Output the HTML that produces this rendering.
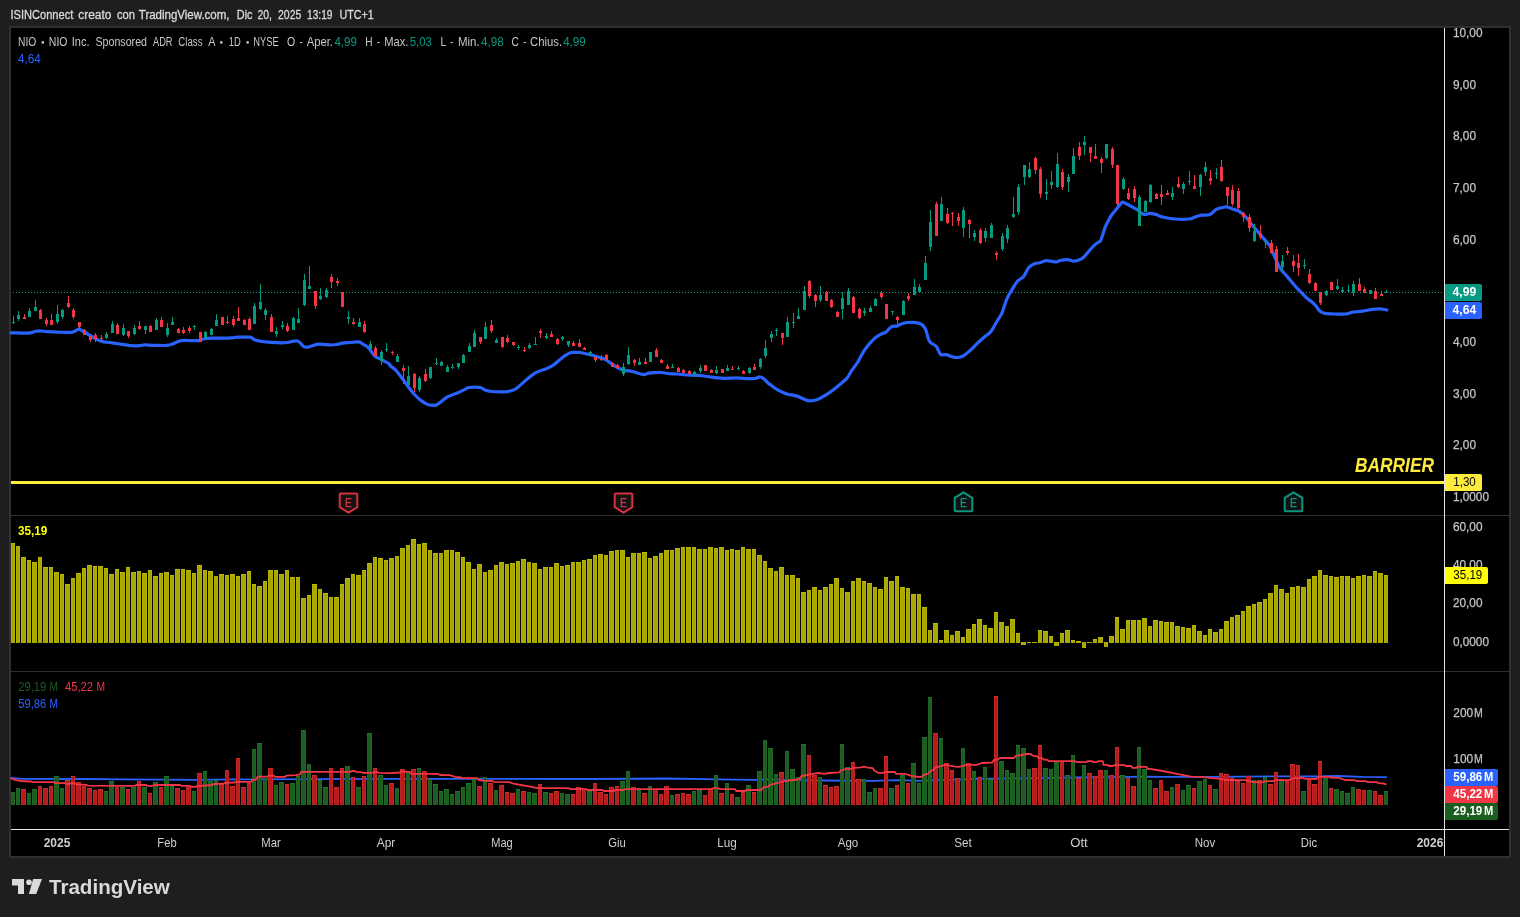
<!DOCTYPE html>
<html><head><meta charset="utf-8"><title>NIO chart</title>
<style>html,body{margin:0;padding:0;background:#1e1e1e;overflow:hidden}svg text{font-family:"Liberation Sans",sans-serif}</style></head>
<body>
<div style="will-change:transform;width:1520px;height:917px">
<svg width="1520" height="917" viewBox="0 0 1520 917" style="display:block">
<rect width="1520" height="917" fill="#1e1e1e"/>
<rect x="9" y="26" width="1502" height="832" fill="#2f2f2f"/>
<rect x="11" y="28" width="1498" height="828" fill="#000"/>
<g shape-rendering="crispEdges">
<rect x="11" y="515" width="1498" height="1" fill="#2e2e2e"/>
<rect x="11" y="671" width="1498" height="1" fill="#2e2e2e"/>
<line x1="13" x2="1444" y1="292.5" y2="292.5" stroke="#089981" stroke-width="1" stroke-dasharray="1 2"/>
<rect x="11" y="543" width="4" height="100" fill="#b0ae00"/>
<rect x="11" y="543" width="4" height="1" fill="#bab800"/>
<rect x="12" y="544" width="2" height="99" fill="#a8a600"/>
<rect x="16" y="546" width="4" height="97" fill="#b0ae00"/>
<rect x="16" y="546" width="4" height="1" fill="#bab800"/>
<rect x="17" y="547" width="2" height="96" fill="#a8a600"/>
<rect x="21" y="557" width="5" height="86" fill="#b0ae00"/>
<rect x="21" y="557" width="5" height="1" fill="#bab800"/>
<rect x="22" y="558" width="3" height="85" fill="#a8a600"/>
<rect x="27" y="560" width="4" height="83" fill="#b0ae00"/>
<rect x="27" y="560" width="4" height="1" fill="#bab800"/>
<rect x="28" y="561" width="2" height="82" fill="#a8a600"/>
<rect x="32" y="562" width="5" height="81" fill="#b0ae00"/>
<rect x="32" y="562" width="5" height="1" fill="#bab800"/>
<rect x="33" y="563" width="3" height="80" fill="#a8a600"/>
<rect x="38" y="557" width="4" height="86" fill="#b0ae00"/>
<rect x="38" y="557" width="4" height="1" fill="#bab800"/>
<rect x="39" y="558" width="2" height="85" fill="#a8a600"/>
<rect x="43" y="567" width="5" height="76" fill="#b0ae00"/>
<rect x="43" y="567" width="5" height="1" fill="#bab800"/>
<rect x="44" y="568" width="3" height="75" fill="#a8a600"/>
<rect x="49" y="567" width="4" height="76" fill="#b0ae00"/>
<rect x="49" y="567" width="4" height="1" fill="#bab800"/>
<rect x="50" y="568" width="2" height="75" fill="#a8a600"/>
<rect x="54" y="572" width="5" height="71" fill="#b0ae00"/>
<rect x="54" y="572" width="5" height="1" fill="#bab800"/>
<rect x="55" y="573" width="3" height="70" fill="#a8a600"/>
<rect x="60" y="574" width="4" height="69" fill="#b0ae00"/>
<rect x="60" y="574" width="4" height="1" fill="#bab800"/>
<rect x="61" y="575" width="2" height="68" fill="#a8a600"/>
<rect x="65" y="584" width="5" height="59" fill="#b0ae00"/>
<rect x="65" y="584" width="5" height="1" fill="#bab800"/>
<rect x="66" y="585" width="3" height="58" fill="#a8a600"/>
<rect x="71" y="578" width="4" height="65" fill="#b0ae00"/>
<rect x="71" y="578" width="4" height="1" fill="#bab800"/>
<rect x="72" y="579" width="2" height="64" fill="#a8a600"/>
<rect x="76" y="573" width="5" height="70" fill="#b0ae00"/>
<rect x="76" y="573" width="5" height="1" fill="#bab800"/>
<rect x="77" y="574" width="3" height="69" fill="#a8a600"/>
<rect x="82" y="568" width="4" height="75" fill="#b0ae00"/>
<rect x="82" y="568" width="4" height="1" fill="#bab800"/>
<rect x="83" y="569" width="2" height="74" fill="#a8a600"/>
<rect x="87" y="565" width="5" height="78" fill="#b0ae00"/>
<rect x="87" y="565" width="5" height="1" fill="#bab800"/>
<rect x="88" y="566" width="3" height="77" fill="#a8a600"/>
<rect x="93" y="566" width="4" height="77" fill="#b0ae00"/>
<rect x="93" y="566" width="4" height="1" fill="#bab800"/>
<rect x="94" y="567" width="2" height="76" fill="#a8a600"/>
<rect x="98" y="566" width="5" height="77" fill="#b0ae00"/>
<rect x="98" y="566" width="5" height="1" fill="#bab800"/>
<rect x="99" y="567" width="3" height="76" fill="#a8a600"/>
<rect x="104" y="568" width="4" height="75" fill="#b0ae00"/>
<rect x="104" y="568" width="4" height="1" fill="#bab800"/>
<rect x="105" y="569" width="2" height="74" fill="#a8a600"/>
<rect x="109" y="574" width="5" height="69" fill="#b0ae00"/>
<rect x="109" y="574" width="5" height="1" fill="#bab800"/>
<rect x="110" y="575" width="3" height="68" fill="#a8a600"/>
<rect x="115" y="569" width="4" height="74" fill="#b0ae00"/>
<rect x="115" y="569" width="4" height="1" fill="#bab800"/>
<rect x="116" y="570" width="2" height="73" fill="#a8a600"/>
<rect x="120" y="572" width="5" height="71" fill="#b0ae00"/>
<rect x="120" y="572" width="5" height="1" fill="#bab800"/>
<rect x="121" y="573" width="3" height="70" fill="#a8a600"/>
<rect x="126" y="567" width="4" height="76" fill="#b0ae00"/>
<rect x="126" y="567" width="4" height="1" fill="#bab800"/>
<rect x="127" y="568" width="2" height="75" fill="#a8a600"/>
<rect x="131" y="572" width="5" height="71" fill="#b0ae00"/>
<rect x="131" y="572" width="5" height="1" fill="#bab800"/>
<rect x="132" y="573" width="3" height="70" fill="#a8a600"/>
<rect x="137" y="571" width="4" height="72" fill="#b0ae00"/>
<rect x="137" y="571" width="4" height="1" fill="#bab800"/>
<rect x="138" y="572" width="2" height="71" fill="#a8a600"/>
<rect x="142" y="573" width="5" height="70" fill="#b0ae00"/>
<rect x="142" y="573" width="5" height="1" fill="#bab800"/>
<rect x="143" y="574" width="3" height="69" fill="#a8a600"/>
<rect x="148" y="570" width="4" height="73" fill="#b0ae00"/>
<rect x="148" y="570" width="4" height="1" fill="#bab800"/>
<rect x="149" y="571" width="2" height="72" fill="#a8a600"/>
<rect x="153" y="576" width="5" height="67" fill="#b0ae00"/>
<rect x="153" y="576" width="5" height="1" fill="#bab800"/>
<rect x="154" y="577" width="3" height="66" fill="#a8a600"/>
<rect x="159" y="573" width="4" height="70" fill="#b0ae00"/>
<rect x="159" y="573" width="4" height="1" fill="#bab800"/>
<rect x="160" y="574" width="2" height="69" fill="#a8a600"/>
<rect x="164" y="572" width="5" height="71" fill="#b0ae00"/>
<rect x="164" y="572" width="5" height="1" fill="#bab800"/>
<rect x="165" y="573" width="3" height="70" fill="#a8a600"/>
<rect x="170" y="575" width="4" height="68" fill="#b0ae00"/>
<rect x="170" y="575" width="4" height="1" fill="#bab800"/>
<rect x="171" y="576" width="2" height="67" fill="#a8a600"/>
<rect x="175" y="569" width="5" height="74" fill="#b0ae00"/>
<rect x="175" y="569" width="5" height="1" fill="#bab800"/>
<rect x="176" y="570" width="3" height="73" fill="#a8a600"/>
<rect x="181" y="569" width="4" height="74" fill="#b0ae00"/>
<rect x="181" y="569" width="4" height="1" fill="#bab800"/>
<rect x="182" y="570" width="2" height="73" fill="#a8a600"/>
<rect x="186" y="570" width="5" height="73" fill="#b0ae00"/>
<rect x="186" y="570" width="5" height="1" fill="#bab800"/>
<rect x="187" y="571" width="3" height="72" fill="#a8a600"/>
<rect x="192" y="573" width="4" height="70" fill="#b0ae00"/>
<rect x="192" y="573" width="4" height="1" fill="#bab800"/>
<rect x="193" y="574" width="2" height="69" fill="#a8a600"/>
<rect x="197" y="565" width="5" height="78" fill="#b0ae00"/>
<rect x="197" y="565" width="5" height="1" fill="#bab800"/>
<rect x="198" y="566" width="3" height="77" fill="#a8a600"/>
<rect x="203" y="570" width="4" height="73" fill="#b0ae00"/>
<rect x="203" y="570" width="4" height="1" fill="#bab800"/>
<rect x="204" y="571" width="2" height="72" fill="#a8a600"/>
<rect x="208" y="571" width="5" height="72" fill="#b0ae00"/>
<rect x="208" y="571" width="5" height="1" fill="#bab800"/>
<rect x="209" y="572" width="3" height="71" fill="#a8a600"/>
<rect x="214" y="576" width="4" height="67" fill="#b0ae00"/>
<rect x="214" y="576" width="4" height="1" fill="#bab800"/>
<rect x="215" y="577" width="2" height="66" fill="#a8a600"/>
<rect x="219" y="574" width="5" height="69" fill="#b0ae00"/>
<rect x="219" y="574" width="5" height="1" fill="#bab800"/>
<rect x="220" y="575" width="3" height="68" fill="#a8a600"/>
<rect x="225" y="575" width="4" height="68" fill="#b0ae00"/>
<rect x="225" y="575" width="4" height="1" fill="#bab800"/>
<rect x="226" y="576" width="2" height="67" fill="#a8a600"/>
<rect x="230" y="574" width="5" height="69" fill="#b0ae00"/>
<rect x="230" y="574" width="5" height="1" fill="#bab800"/>
<rect x="231" y="575" width="3" height="68" fill="#a8a600"/>
<rect x="236" y="576" width="4" height="67" fill="#b0ae00"/>
<rect x="236" y="576" width="4" height="1" fill="#bab800"/>
<rect x="237" y="577" width="2" height="66" fill="#a8a600"/>
<rect x="241" y="574" width="5" height="69" fill="#b0ae00"/>
<rect x="241" y="574" width="5" height="1" fill="#bab800"/>
<rect x="242" y="575" width="3" height="68" fill="#a8a600"/>
<rect x="247" y="571" width="4" height="72" fill="#b0ae00"/>
<rect x="247" y="571" width="4" height="1" fill="#bab800"/>
<rect x="248" y="572" width="2" height="71" fill="#a8a600"/>
<rect x="252" y="584" width="4" height="59" fill="#b0ae00"/>
<rect x="252" y="584" width="4" height="1" fill="#bab800"/>
<rect x="253" y="585" width="2" height="58" fill="#a8a600"/>
<rect x="257" y="586" width="5" height="57" fill="#b0ae00"/>
<rect x="257" y="586" width="5" height="1" fill="#bab800"/>
<rect x="258" y="587" width="3" height="56" fill="#a8a600"/>
<rect x="263" y="581" width="4" height="62" fill="#b0ae00"/>
<rect x="263" y="581" width="4" height="1" fill="#bab800"/>
<rect x="264" y="582" width="2" height="61" fill="#a8a600"/>
<rect x="268" y="570" width="5" height="73" fill="#b0ae00"/>
<rect x="268" y="570" width="5" height="1" fill="#bab800"/>
<rect x="269" y="571" width="3" height="72" fill="#a8a600"/>
<rect x="274" y="570" width="4" height="73" fill="#b0ae00"/>
<rect x="274" y="570" width="4" height="1" fill="#bab800"/>
<rect x="275" y="571" width="2" height="72" fill="#a8a600"/>
<rect x="279" y="574" width="5" height="69" fill="#b0ae00"/>
<rect x="279" y="574" width="5" height="1" fill="#bab800"/>
<rect x="280" y="575" width="3" height="68" fill="#a8a600"/>
<rect x="285" y="570" width="4" height="73" fill="#b0ae00"/>
<rect x="285" y="570" width="4" height="1" fill="#bab800"/>
<rect x="286" y="571" width="2" height="72" fill="#a8a600"/>
<rect x="290" y="577" width="5" height="66" fill="#b0ae00"/>
<rect x="290" y="577" width="5" height="1" fill="#bab800"/>
<rect x="291" y="578" width="3" height="65" fill="#a8a600"/>
<rect x="296" y="577" width="4" height="66" fill="#b0ae00"/>
<rect x="296" y="577" width="4" height="1" fill="#bab800"/>
<rect x="297" y="578" width="2" height="65" fill="#a8a600"/>
<rect x="301" y="598" width="5" height="45" fill="#b0ae00"/>
<rect x="301" y="598" width="5" height="1" fill="#bab800"/>
<rect x="302" y="599" width="3" height="44" fill="#a8a600"/>
<rect x="307" y="595" width="4" height="48" fill="#b0ae00"/>
<rect x="307" y="595" width="4" height="1" fill="#bab800"/>
<rect x="308" y="596" width="2" height="47" fill="#a8a600"/>
<rect x="312" y="584" width="5" height="59" fill="#b0ae00"/>
<rect x="312" y="584" width="5" height="1" fill="#bab800"/>
<rect x="313" y="585" width="3" height="58" fill="#a8a600"/>
<rect x="318" y="589" width="4" height="54" fill="#b0ae00"/>
<rect x="318" y="589" width="4" height="1" fill="#bab800"/>
<rect x="319" y="590" width="2" height="53" fill="#a8a600"/>
<rect x="323" y="593" width="5" height="50" fill="#b0ae00"/>
<rect x="323" y="593" width="5" height="1" fill="#bab800"/>
<rect x="324" y="594" width="3" height="49" fill="#a8a600"/>
<rect x="329" y="597" width="4" height="46" fill="#b0ae00"/>
<rect x="329" y="597" width="4" height="1" fill="#bab800"/>
<rect x="330" y="598" width="2" height="45" fill="#a8a600"/>
<rect x="334" y="597" width="5" height="46" fill="#b0ae00"/>
<rect x="334" y="597" width="5" height="1" fill="#bab800"/>
<rect x="335" y="598" width="3" height="45" fill="#a8a600"/>
<rect x="340" y="584" width="4" height="59" fill="#b0ae00"/>
<rect x="340" y="584" width="4" height="1" fill="#bab800"/>
<rect x="341" y="585" width="2" height="58" fill="#a8a600"/>
<rect x="345" y="578" width="5" height="65" fill="#b0ae00"/>
<rect x="345" y="578" width="5" height="1" fill="#bab800"/>
<rect x="346" y="579" width="3" height="64" fill="#a8a600"/>
<rect x="351" y="574" width="4" height="69" fill="#b0ae00"/>
<rect x="351" y="574" width="4" height="1" fill="#bab800"/>
<rect x="352" y="575" width="2" height="68" fill="#a8a600"/>
<rect x="356" y="575" width="5" height="68" fill="#b0ae00"/>
<rect x="356" y="575" width="5" height="1" fill="#bab800"/>
<rect x="357" y="576" width="3" height="67" fill="#a8a600"/>
<rect x="362" y="570" width="4" height="73" fill="#b0ae00"/>
<rect x="362" y="570" width="4" height="1" fill="#bab800"/>
<rect x="363" y="571" width="2" height="72" fill="#a8a600"/>
<rect x="367" y="563" width="5" height="80" fill="#b0ae00"/>
<rect x="367" y="563" width="5" height="1" fill="#bab800"/>
<rect x="368" y="564" width="3" height="79" fill="#a8a600"/>
<rect x="373" y="557" width="4" height="86" fill="#b0ae00"/>
<rect x="373" y="557" width="4" height="1" fill="#bab800"/>
<rect x="374" y="558" width="2" height="85" fill="#a8a600"/>
<rect x="378" y="558" width="5" height="85" fill="#b0ae00"/>
<rect x="378" y="558" width="5" height="1" fill="#bab800"/>
<rect x="379" y="559" width="3" height="84" fill="#a8a600"/>
<rect x="384" y="560" width="4" height="83" fill="#b0ae00"/>
<rect x="384" y="560" width="4" height="1" fill="#bab800"/>
<rect x="385" y="561" width="2" height="82" fill="#a8a600"/>
<rect x="389" y="558" width="5" height="85" fill="#b0ae00"/>
<rect x="389" y="558" width="5" height="1" fill="#bab800"/>
<rect x="390" y="559" width="3" height="84" fill="#a8a600"/>
<rect x="395" y="556" width="4" height="87" fill="#b0ae00"/>
<rect x="395" y="556" width="4" height="1" fill="#bab800"/>
<rect x="396" y="557" width="2" height="86" fill="#a8a600"/>
<rect x="400" y="548" width="5" height="95" fill="#b0ae00"/>
<rect x="400" y="548" width="5" height="1" fill="#bab800"/>
<rect x="401" y="549" width="3" height="94" fill="#a8a600"/>
<rect x="406" y="545" width="4" height="98" fill="#b0ae00"/>
<rect x="406" y="545" width="4" height="1" fill="#bab800"/>
<rect x="407" y="546" width="2" height="97" fill="#a8a600"/>
<rect x="411" y="539" width="5" height="104" fill="#b0ae00"/>
<rect x="411" y="539" width="5" height="1" fill="#bab800"/>
<rect x="412" y="540" width="3" height="103" fill="#a8a600"/>
<rect x="417" y="544" width="4" height="99" fill="#b0ae00"/>
<rect x="417" y="544" width="4" height="1" fill="#bab800"/>
<rect x="418" y="545" width="2" height="98" fill="#a8a600"/>
<rect x="422" y="543" width="5" height="100" fill="#b0ae00"/>
<rect x="422" y="543" width="5" height="1" fill="#bab800"/>
<rect x="423" y="544" width="3" height="99" fill="#a8a600"/>
<rect x="428" y="550" width="4" height="93" fill="#b0ae00"/>
<rect x="428" y="550" width="4" height="1" fill="#bab800"/>
<rect x="429" y="551" width="2" height="92" fill="#a8a600"/>
<rect x="433" y="553" width="5" height="90" fill="#b0ae00"/>
<rect x="433" y="553" width="5" height="1" fill="#bab800"/>
<rect x="434" y="554" width="3" height="89" fill="#a8a600"/>
<rect x="439" y="553" width="4" height="90" fill="#b0ae00"/>
<rect x="439" y="553" width="4" height="1" fill="#bab800"/>
<rect x="440" y="554" width="2" height="89" fill="#a8a600"/>
<rect x="444" y="550" width="5" height="93" fill="#b0ae00"/>
<rect x="444" y="550" width="5" height="1" fill="#bab800"/>
<rect x="445" y="551" width="3" height="92" fill="#a8a600"/>
<rect x="450" y="550" width="4" height="93" fill="#b0ae00"/>
<rect x="450" y="550" width="4" height="1" fill="#bab800"/>
<rect x="451" y="551" width="2" height="92" fill="#a8a600"/>
<rect x="455" y="552" width="5" height="91" fill="#b0ae00"/>
<rect x="455" y="552" width="5" height="1" fill="#bab800"/>
<rect x="456" y="553" width="3" height="90" fill="#a8a600"/>
<rect x="461" y="557" width="4" height="86" fill="#b0ae00"/>
<rect x="461" y="557" width="4" height="1" fill="#bab800"/>
<rect x="462" y="558" width="2" height="85" fill="#a8a600"/>
<rect x="466" y="562" width="5" height="81" fill="#b0ae00"/>
<rect x="466" y="562" width="5" height="1" fill="#bab800"/>
<rect x="467" y="563" width="3" height="80" fill="#a8a600"/>
<rect x="472" y="569" width="4" height="74" fill="#b0ae00"/>
<rect x="472" y="569" width="4" height="1" fill="#bab800"/>
<rect x="473" y="570" width="2" height="73" fill="#a8a600"/>
<rect x="477" y="564" width="5" height="79" fill="#b0ae00"/>
<rect x="477" y="564" width="5" height="1" fill="#bab800"/>
<rect x="478" y="565" width="3" height="78" fill="#a8a600"/>
<rect x="483" y="572" width="4" height="71" fill="#b0ae00"/>
<rect x="483" y="572" width="4" height="1" fill="#bab800"/>
<rect x="484" y="573" width="2" height="70" fill="#a8a600"/>
<rect x="488" y="570" width="5" height="73" fill="#b0ae00"/>
<rect x="488" y="570" width="5" height="1" fill="#bab800"/>
<rect x="489" y="571" width="3" height="72" fill="#a8a600"/>
<rect x="494" y="565" width="4" height="78" fill="#b0ae00"/>
<rect x="494" y="565" width="4" height="1" fill="#bab800"/>
<rect x="495" y="566" width="2" height="77" fill="#a8a600"/>
<rect x="499" y="562" width="5" height="81" fill="#b0ae00"/>
<rect x="499" y="562" width="5" height="1" fill="#bab800"/>
<rect x="500" y="563" width="3" height="80" fill="#a8a600"/>
<rect x="505" y="564" width="4" height="79" fill="#b0ae00"/>
<rect x="505" y="564" width="4" height="1" fill="#bab800"/>
<rect x="506" y="565" width="2" height="78" fill="#a8a600"/>
<rect x="510" y="563" width="5" height="80" fill="#b0ae00"/>
<rect x="510" y="563" width="5" height="1" fill="#bab800"/>
<rect x="511" y="564" width="3" height="79" fill="#a8a600"/>
<rect x="516" y="561" width="4" height="82" fill="#b0ae00"/>
<rect x="516" y="561" width="4" height="1" fill="#bab800"/>
<rect x="517" y="562" width="2" height="81" fill="#a8a600"/>
<rect x="521" y="559" width="5" height="84" fill="#b0ae00"/>
<rect x="521" y="559" width="5" height="1" fill="#bab800"/>
<rect x="522" y="560" width="3" height="83" fill="#a8a600"/>
<rect x="527" y="562" width="4" height="81" fill="#b0ae00"/>
<rect x="527" y="562" width="4" height="1" fill="#bab800"/>
<rect x="528" y="563" width="2" height="80" fill="#a8a600"/>
<rect x="532" y="563" width="5" height="80" fill="#b0ae00"/>
<rect x="532" y="563" width="5" height="1" fill="#bab800"/>
<rect x="533" y="564" width="3" height="79" fill="#a8a600"/>
<rect x="538" y="569" width="4" height="74" fill="#b0ae00"/>
<rect x="538" y="569" width="4" height="1" fill="#bab800"/>
<rect x="539" y="570" width="2" height="73" fill="#a8a600"/>
<rect x="543" y="567" width="5" height="76" fill="#b0ae00"/>
<rect x="543" y="567" width="5" height="1" fill="#bab800"/>
<rect x="544" y="568" width="3" height="75" fill="#a8a600"/>
<rect x="549" y="567" width="4" height="76" fill="#b0ae00"/>
<rect x="549" y="567" width="4" height="1" fill="#bab800"/>
<rect x="550" y="568" width="2" height="75" fill="#a8a600"/>
<rect x="554" y="563" width="5" height="80" fill="#b0ae00"/>
<rect x="554" y="563" width="5" height="1" fill="#bab800"/>
<rect x="555" y="564" width="3" height="79" fill="#a8a600"/>
<rect x="560" y="566" width="4" height="77" fill="#b0ae00"/>
<rect x="560" y="566" width="4" height="1" fill="#bab800"/>
<rect x="561" y="567" width="2" height="76" fill="#a8a600"/>
<rect x="565" y="565" width="5" height="78" fill="#b0ae00"/>
<rect x="565" y="565" width="5" height="1" fill="#bab800"/>
<rect x="566" y="566" width="3" height="77" fill="#a8a600"/>
<rect x="571" y="562" width="4" height="81" fill="#b0ae00"/>
<rect x="571" y="562" width="4" height="1" fill="#bab800"/>
<rect x="572" y="563" width="2" height="80" fill="#a8a600"/>
<rect x="576" y="562" width="5" height="81" fill="#b0ae00"/>
<rect x="576" y="562" width="5" height="1" fill="#bab800"/>
<rect x="577" y="563" width="3" height="80" fill="#a8a600"/>
<rect x="582" y="560" width="4" height="83" fill="#b0ae00"/>
<rect x="582" y="560" width="4" height="1" fill="#bab800"/>
<rect x="583" y="561" width="2" height="82" fill="#a8a600"/>
<rect x="587" y="559" width="5" height="84" fill="#b0ae00"/>
<rect x="587" y="559" width="5" height="1" fill="#bab800"/>
<rect x="588" y="560" width="3" height="83" fill="#a8a600"/>
<rect x="593" y="555" width="4" height="88" fill="#b0ae00"/>
<rect x="593" y="555" width="4" height="1" fill="#bab800"/>
<rect x="594" y="556" width="2" height="87" fill="#a8a600"/>
<rect x="598" y="554" width="5" height="89" fill="#b0ae00"/>
<rect x="598" y="554" width="5" height="1" fill="#bab800"/>
<rect x="599" y="555" width="3" height="88" fill="#a8a600"/>
<rect x="604" y="555" width="4" height="88" fill="#b0ae00"/>
<rect x="604" y="555" width="4" height="1" fill="#bab800"/>
<rect x="605" y="556" width="2" height="87" fill="#a8a600"/>
<rect x="609" y="551" width="5" height="92" fill="#b0ae00"/>
<rect x="609" y="551" width="5" height="1" fill="#bab800"/>
<rect x="610" y="552" width="3" height="91" fill="#a8a600"/>
<rect x="615" y="550" width="4" height="93" fill="#b0ae00"/>
<rect x="615" y="550" width="4" height="1" fill="#bab800"/>
<rect x="616" y="551" width="2" height="92" fill="#a8a600"/>
<rect x="620" y="550" width="5" height="93" fill="#b0ae00"/>
<rect x="620" y="550" width="5" height="1" fill="#bab800"/>
<rect x="621" y="551" width="3" height="92" fill="#a8a600"/>
<rect x="626" y="557" width="4" height="86" fill="#b0ae00"/>
<rect x="626" y="557" width="4" height="1" fill="#bab800"/>
<rect x="627" y="558" width="2" height="85" fill="#a8a600"/>
<rect x="631" y="553" width="5" height="90" fill="#b0ae00"/>
<rect x="631" y="553" width="5" height="1" fill="#bab800"/>
<rect x="632" y="554" width="3" height="89" fill="#a8a600"/>
<rect x="637" y="553" width="4" height="90" fill="#b0ae00"/>
<rect x="637" y="553" width="4" height="1" fill="#bab800"/>
<rect x="638" y="554" width="2" height="89" fill="#a8a600"/>
<rect x="642" y="552" width="5" height="91" fill="#b0ae00"/>
<rect x="642" y="552" width="5" height="1" fill="#bab800"/>
<rect x="643" y="553" width="3" height="90" fill="#a8a600"/>
<rect x="648" y="558" width="4" height="85" fill="#b0ae00"/>
<rect x="648" y="558" width="4" height="1" fill="#bab800"/>
<rect x="649" y="559" width="2" height="84" fill="#a8a600"/>
<rect x="653" y="556" width="5" height="87" fill="#b0ae00"/>
<rect x="653" y="556" width="5" height="1" fill="#bab800"/>
<rect x="654" y="557" width="3" height="86" fill="#a8a600"/>
<rect x="659" y="553" width="4" height="90" fill="#b0ae00"/>
<rect x="659" y="553" width="4" height="1" fill="#bab800"/>
<rect x="660" y="554" width="2" height="89" fill="#a8a600"/>
<rect x="664" y="550" width="5" height="93" fill="#b0ae00"/>
<rect x="664" y="550" width="5" height="1" fill="#bab800"/>
<rect x="665" y="551" width="3" height="92" fill="#a8a600"/>
<rect x="670" y="550" width="4" height="93" fill="#b0ae00"/>
<rect x="670" y="550" width="4" height="1" fill="#bab800"/>
<rect x="671" y="551" width="2" height="92" fill="#a8a600"/>
<rect x="675" y="548" width="5" height="95" fill="#b0ae00"/>
<rect x="675" y="548" width="5" height="1" fill="#bab800"/>
<rect x="676" y="549" width="3" height="94" fill="#a8a600"/>
<rect x="681" y="547" width="4" height="96" fill="#b0ae00"/>
<rect x="681" y="547" width="4" height="1" fill="#bab800"/>
<rect x="682" y="548" width="2" height="95" fill="#a8a600"/>
<rect x="686" y="547" width="5" height="96" fill="#b0ae00"/>
<rect x="686" y="547" width="5" height="1" fill="#bab800"/>
<rect x="687" y="548" width="3" height="95" fill="#a8a600"/>
<rect x="692" y="547" width="4" height="96" fill="#b0ae00"/>
<rect x="692" y="547" width="4" height="1" fill="#bab800"/>
<rect x="693" y="548" width="2" height="95" fill="#a8a600"/>
<rect x="697" y="549" width="5" height="94" fill="#b0ae00"/>
<rect x="697" y="549" width="5" height="1" fill="#bab800"/>
<rect x="698" y="550" width="3" height="93" fill="#a8a600"/>
<rect x="703" y="549" width="4" height="94" fill="#b0ae00"/>
<rect x="703" y="549" width="4" height="1" fill="#bab800"/>
<rect x="704" y="550" width="2" height="93" fill="#a8a600"/>
<rect x="708" y="547" width="5" height="96" fill="#b0ae00"/>
<rect x="708" y="547" width="5" height="1" fill="#bab800"/>
<rect x="709" y="548" width="3" height="95" fill="#a8a600"/>
<rect x="714" y="548" width="4" height="95" fill="#b0ae00"/>
<rect x="714" y="548" width="4" height="1" fill="#bab800"/>
<rect x="715" y="549" width="2" height="94" fill="#a8a600"/>
<rect x="719" y="547" width="5" height="96" fill="#b0ae00"/>
<rect x="719" y="547" width="5" height="1" fill="#bab800"/>
<rect x="720" y="548" width="3" height="95" fill="#a8a600"/>
<rect x="725" y="550" width="4" height="93" fill="#b0ae00"/>
<rect x="725" y="550" width="4" height="1" fill="#bab800"/>
<rect x="726" y="551" width="2" height="92" fill="#a8a600"/>
<rect x="730" y="549" width="4" height="94" fill="#b0ae00"/>
<rect x="730" y="549" width="4" height="1" fill="#bab800"/>
<rect x="731" y="550" width="2" height="93" fill="#a8a600"/>
<rect x="735" y="550" width="5" height="93" fill="#b0ae00"/>
<rect x="735" y="550" width="5" height="1" fill="#bab800"/>
<rect x="736" y="551" width="3" height="92" fill="#a8a600"/>
<rect x="741" y="547" width="4" height="96" fill="#b0ae00"/>
<rect x="741" y="547" width="4" height="1" fill="#bab800"/>
<rect x="742" y="548" width="2" height="95" fill="#a8a600"/>
<rect x="746" y="549" width="5" height="94" fill="#b0ae00"/>
<rect x="746" y="549" width="5" height="1" fill="#bab800"/>
<rect x="747" y="550" width="3" height="93" fill="#a8a600"/>
<rect x="752" y="549" width="4" height="94" fill="#b0ae00"/>
<rect x="752" y="549" width="4" height="1" fill="#bab800"/>
<rect x="753" y="550" width="2" height="93" fill="#a8a600"/>
<rect x="757" y="555" width="5" height="88" fill="#b0ae00"/>
<rect x="757" y="555" width="5" height="1" fill="#bab800"/>
<rect x="758" y="556" width="3" height="87" fill="#a8a600"/>
<rect x="763" y="561" width="4" height="82" fill="#b0ae00"/>
<rect x="763" y="561" width="4" height="1" fill="#bab800"/>
<rect x="764" y="562" width="2" height="81" fill="#a8a600"/>
<rect x="768" y="568" width="5" height="75" fill="#b0ae00"/>
<rect x="768" y="568" width="5" height="1" fill="#bab800"/>
<rect x="769" y="569" width="3" height="74" fill="#a8a600"/>
<rect x="774" y="571" width="4" height="72" fill="#b0ae00"/>
<rect x="774" y="571" width="4" height="1" fill="#bab800"/>
<rect x="775" y="572" width="2" height="71" fill="#a8a600"/>
<rect x="779" y="567" width="5" height="76" fill="#b0ae00"/>
<rect x="779" y="567" width="5" height="1" fill="#bab800"/>
<rect x="780" y="568" width="3" height="75" fill="#a8a600"/>
<rect x="785" y="575" width="4" height="68" fill="#b0ae00"/>
<rect x="785" y="575" width="4" height="1" fill="#bab800"/>
<rect x="786" y="576" width="2" height="67" fill="#a8a600"/>
<rect x="790" y="575" width="5" height="68" fill="#b0ae00"/>
<rect x="790" y="575" width="5" height="1" fill="#bab800"/>
<rect x="791" y="576" width="3" height="67" fill="#a8a600"/>
<rect x="796" y="578" width="4" height="65" fill="#b0ae00"/>
<rect x="796" y="578" width="4" height="1" fill="#bab800"/>
<rect x="797" y="579" width="2" height="64" fill="#a8a600"/>
<rect x="801" y="592" width="5" height="51" fill="#b0ae00"/>
<rect x="801" y="592" width="5" height="1" fill="#bab800"/>
<rect x="802" y="593" width="3" height="50" fill="#a8a600"/>
<rect x="807" y="590" width="4" height="53" fill="#b0ae00"/>
<rect x="807" y="590" width="4" height="1" fill="#bab800"/>
<rect x="808" y="591" width="2" height="52" fill="#a8a600"/>
<rect x="812" y="587" width="5" height="56" fill="#b0ae00"/>
<rect x="812" y="587" width="5" height="1" fill="#bab800"/>
<rect x="813" y="588" width="3" height="55" fill="#a8a600"/>
<rect x="818" y="590" width="4" height="53" fill="#b0ae00"/>
<rect x="818" y="590" width="4" height="1" fill="#bab800"/>
<rect x="819" y="591" width="2" height="52" fill="#a8a600"/>
<rect x="823" y="587" width="5" height="56" fill="#b0ae00"/>
<rect x="823" y="587" width="5" height="1" fill="#bab800"/>
<rect x="824" y="588" width="3" height="55" fill="#a8a600"/>
<rect x="829" y="584" width="4" height="59" fill="#b0ae00"/>
<rect x="829" y="584" width="4" height="1" fill="#bab800"/>
<rect x="830" y="585" width="2" height="58" fill="#a8a600"/>
<rect x="834" y="578" width="5" height="65" fill="#b0ae00"/>
<rect x="834" y="578" width="5" height="1" fill="#bab800"/>
<rect x="835" y="579" width="3" height="64" fill="#a8a600"/>
<rect x="840" y="588" width="4" height="55" fill="#b0ae00"/>
<rect x="840" y="588" width="4" height="1" fill="#bab800"/>
<rect x="841" y="589" width="2" height="54" fill="#a8a600"/>
<rect x="845" y="592" width="5" height="51" fill="#b0ae00"/>
<rect x="845" y="592" width="5" height="1" fill="#bab800"/>
<rect x="846" y="593" width="3" height="50" fill="#a8a600"/>
<rect x="851" y="581" width="4" height="62" fill="#b0ae00"/>
<rect x="851" y="581" width="4" height="1" fill="#bab800"/>
<rect x="852" y="582" width="2" height="61" fill="#a8a600"/>
<rect x="856" y="578" width="5" height="65" fill="#b0ae00"/>
<rect x="856" y="578" width="5" height="1" fill="#bab800"/>
<rect x="857" y="579" width="3" height="64" fill="#a8a600"/>
<rect x="862" y="581" width="4" height="62" fill="#b0ae00"/>
<rect x="862" y="581" width="4" height="1" fill="#bab800"/>
<rect x="863" y="582" width="2" height="61" fill="#a8a600"/>
<rect x="867" y="583" width="5" height="60" fill="#b0ae00"/>
<rect x="867" y="583" width="5" height="1" fill="#bab800"/>
<rect x="868" y="584" width="3" height="59" fill="#a8a600"/>
<rect x="873" y="587" width="4" height="56" fill="#b0ae00"/>
<rect x="873" y="587" width="4" height="1" fill="#bab800"/>
<rect x="874" y="588" width="2" height="55" fill="#a8a600"/>
<rect x="878" y="589" width="5" height="54" fill="#b0ae00"/>
<rect x="878" y="589" width="5" height="1" fill="#bab800"/>
<rect x="879" y="590" width="3" height="53" fill="#a8a600"/>
<rect x="884" y="577" width="4" height="66" fill="#b0ae00"/>
<rect x="884" y="577" width="4" height="1" fill="#bab800"/>
<rect x="885" y="578" width="2" height="65" fill="#a8a600"/>
<rect x="889" y="581" width="5" height="62" fill="#b0ae00"/>
<rect x="889" y="581" width="5" height="1" fill="#bab800"/>
<rect x="890" y="582" width="3" height="61" fill="#a8a600"/>
<rect x="895" y="576" width="4" height="67" fill="#b0ae00"/>
<rect x="895" y="576" width="4" height="1" fill="#bab800"/>
<rect x="896" y="577" width="2" height="66" fill="#a8a600"/>
<rect x="900" y="587" width="5" height="56" fill="#b0ae00"/>
<rect x="900" y="587" width="5" height="1" fill="#bab800"/>
<rect x="901" y="588" width="3" height="55" fill="#a8a600"/>
<rect x="906" y="588" width="4" height="55" fill="#b0ae00"/>
<rect x="906" y="588" width="4" height="1" fill="#bab800"/>
<rect x="907" y="589" width="2" height="54" fill="#a8a600"/>
<rect x="911" y="594" width="5" height="49" fill="#b0ae00"/>
<rect x="911" y="594" width="5" height="1" fill="#bab800"/>
<rect x="912" y="595" width="3" height="48" fill="#a8a600"/>
<rect x="917" y="594" width="4" height="49" fill="#b0ae00"/>
<rect x="917" y="594" width="4" height="1" fill="#bab800"/>
<rect x="918" y="595" width="2" height="48" fill="#a8a600"/>
<rect x="922" y="607" width="5" height="36" fill="#b0ae00"/>
<rect x="922" y="607" width="5" height="1" fill="#bab800"/>
<rect x="923" y="608" width="3" height="35" fill="#a8a600"/>
<rect x="928" y="630" width="4" height="13" fill="#b0ae00"/>
<rect x="928" y="630" width="4" height="1" fill="#bab800"/>
<rect x="929" y="631" width="2" height="12" fill="#a8a600"/>
<rect x="933" y="623" width="5" height="20" fill="#b0ae00"/>
<rect x="933" y="623" width="5" height="1" fill="#bab800"/>
<rect x="934" y="624" width="3" height="19" fill="#a8a600"/>
<rect x="939" y="640" width="4" height="3" fill="#b0ae00"/>
<rect x="939" y="640" width="4" height="1" fill="#bab800"/>
<rect x="940" y="641" width="2" height="2" fill="#a8a600"/>
<rect x="944" y="630" width="5" height="13" fill="#b0ae00"/>
<rect x="944" y="630" width="5" height="1" fill="#bab800"/>
<rect x="945" y="631" width="3" height="12" fill="#a8a600"/>
<rect x="950" y="635" width="4" height="8" fill="#b0ae00"/>
<rect x="950" y="635" width="4" height="1" fill="#bab800"/>
<rect x="951" y="636" width="2" height="7" fill="#a8a600"/>
<rect x="955" y="631" width="5" height="12" fill="#b0ae00"/>
<rect x="955" y="631" width="5" height="1" fill="#bab800"/>
<rect x="956" y="632" width="3" height="11" fill="#a8a600"/>
<rect x="961" y="637" width="4" height="6" fill="#b0ae00"/>
<rect x="961" y="637" width="4" height="1" fill="#bab800"/>
<rect x="962" y="638" width="2" height="5" fill="#a8a600"/>
<rect x="966" y="629" width="5" height="14" fill="#b0ae00"/>
<rect x="966" y="629" width="5" height="1" fill="#bab800"/>
<rect x="967" y="630" width="3" height="13" fill="#a8a600"/>
<rect x="972" y="624" width="4" height="19" fill="#b0ae00"/>
<rect x="972" y="624" width="4" height="1" fill="#bab800"/>
<rect x="973" y="625" width="2" height="18" fill="#a8a600"/>
<rect x="977" y="619" width="5" height="24" fill="#b0ae00"/>
<rect x="977" y="619" width="5" height="1" fill="#bab800"/>
<rect x="978" y="620" width="3" height="23" fill="#a8a600"/>
<rect x="983" y="625" width="4" height="18" fill="#b0ae00"/>
<rect x="983" y="625" width="4" height="1" fill="#bab800"/>
<rect x="984" y="626" width="2" height="17" fill="#a8a600"/>
<rect x="988" y="628" width="5" height="15" fill="#b0ae00"/>
<rect x="988" y="628" width="5" height="1" fill="#bab800"/>
<rect x="989" y="629" width="3" height="14" fill="#a8a600"/>
<rect x="994" y="612" width="4" height="31" fill="#b0ae00"/>
<rect x="994" y="612" width="4" height="1" fill="#bab800"/>
<rect x="995" y="613" width="2" height="30" fill="#a8a600"/>
<rect x="999" y="622" width="5" height="21" fill="#b0ae00"/>
<rect x="999" y="622" width="5" height="1" fill="#bab800"/>
<rect x="1000" y="623" width="3" height="20" fill="#a8a600"/>
<rect x="1005" y="626" width="4" height="17" fill="#b0ae00"/>
<rect x="1005" y="626" width="4" height="1" fill="#bab800"/>
<rect x="1006" y="627" width="2" height="16" fill="#a8a600"/>
<rect x="1010" y="619" width="5" height="24" fill="#b0ae00"/>
<rect x="1010" y="619" width="5" height="1" fill="#bab800"/>
<rect x="1011" y="620" width="3" height="23" fill="#a8a600"/>
<rect x="1016" y="633" width="4" height="10" fill="#b0ae00"/>
<rect x="1016" y="633" width="4" height="1" fill="#bab800"/>
<rect x="1017" y="634" width="2" height="9" fill="#a8a600"/>
<rect x="1021" y="642" width="5" height="3" fill="#b0ae00"/>
<rect x="1021" y="642" width="5" height="1" fill="#b0ae00"/>
<rect x="1022" y="643" width="3" height="2" fill="#a8a600"/>
<rect x="1027" y="642" width="4" height="1" fill="#b0ae00"/>
<rect x="1032" y="642" width="5" height="1" fill="#b0ae00"/>
<rect x="1038" y="630" width="4" height="13" fill="#b0ae00"/>
<rect x="1038" y="630" width="4" height="1" fill="#bab800"/>
<rect x="1039" y="631" width="2" height="12" fill="#a8a600"/>
<rect x="1043" y="631" width="5" height="12" fill="#b0ae00"/>
<rect x="1043" y="631" width="5" height="1" fill="#bab800"/>
<rect x="1044" y="632" width="3" height="11" fill="#a8a600"/>
<rect x="1049" y="636" width="4" height="7" fill="#b0ae00"/>
<rect x="1049" y="636" width="4" height="1" fill="#bab800"/>
<rect x="1050" y="637" width="2" height="6" fill="#a8a600"/>
<rect x="1054" y="642" width="5" height="4" fill="#b0ae00"/>
<rect x="1054" y="642" width="5" height="1" fill="#b0ae00"/>
<rect x="1055" y="643" width="3" height="3" fill="#a8a600"/>
<rect x="1060" y="633" width="4" height="10" fill="#b0ae00"/>
<rect x="1060" y="633" width="4" height="1" fill="#bab800"/>
<rect x="1061" y="634" width="2" height="9" fill="#a8a600"/>
<rect x="1065" y="630" width="5" height="13" fill="#b0ae00"/>
<rect x="1065" y="630" width="5" height="1" fill="#bab800"/>
<rect x="1066" y="631" width="3" height="12" fill="#a8a600"/>
<rect x="1071" y="640" width="4" height="3" fill="#b0ae00"/>
<rect x="1071" y="640" width="4" height="1" fill="#bab800"/>
<rect x="1072" y="641" width="2" height="2" fill="#a8a600"/>
<rect x="1076" y="641" width="5" height="2" fill="#b0ae00"/>
<rect x="1076" y="641" width="5" height="1" fill="#bab800"/>
<rect x="1077" y="642" width="3" height="1" fill="#a8a600"/>
<rect x="1082" y="642" width="4" height="6" fill="#b0ae00"/>
<rect x="1082" y="642" width="4" height="1" fill="#b0ae00"/>
<rect x="1083" y="643" width="2" height="5" fill="#a8a600"/>
<rect x="1087" y="642" width="5" height="1" fill="#b0ae00"/>
<rect x="1093" y="639" width="4" height="4" fill="#b0ae00"/>
<rect x="1093" y="639" width="4" height="1" fill="#bab800"/>
<rect x="1094" y="640" width="2" height="3" fill="#a8a600"/>
<rect x="1098" y="637" width="5" height="6" fill="#b0ae00"/>
<rect x="1098" y="637" width="5" height="1" fill="#bab800"/>
<rect x="1099" y="638" width="3" height="5" fill="#a8a600"/>
<rect x="1104" y="642" width="4" height="5" fill="#b0ae00"/>
<rect x="1104" y="642" width="4" height="1" fill="#b0ae00"/>
<rect x="1105" y="643" width="2" height="4" fill="#a8a600"/>
<rect x="1109" y="636" width="5" height="7" fill="#b0ae00"/>
<rect x="1109" y="636" width="5" height="1" fill="#bab800"/>
<rect x="1110" y="637" width="3" height="6" fill="#a8a600"/>
<rect x="1115" y="617" width="4" height="26" fill="#b0ae00"/>
<rect x="1115" y="617" width="4" height="1" fill="#bab800"/>
<rect x="1116" y="618" width="2" height="25" fill="#a8a600"/>
<rect x="1120" y="629" width="5" height="14" fill="#b0ae00"/>
<rect x="1120" y="629" width="5" height="1" fill="#bab800"/>
<rect x="1121" y="630" width="3" height="13" fill="#a8a600"/>
<rect x="1126" y="620" width="4" height="23" fill="#b0ae00"/>
<rect x="1126" y="620" width="4" height="1" fill="#bab800"/>
<rect x="1127" y="621" width="2" height="22" fill="#a8a600"/>
<rect x="1131" y="620" width="5" height="23" fill="#b0ae00"/>
<rect x="1131" y="620" width="5" height="1" fill="#bab800"/>
<rect x="1132" y="621" width="3" height="22" fill="#a8a600"/>
<rect x="1137" y="620" width="4" height="23" fill="#b0ae00"/>
<rect x="1137" y="620" width="4" height="1" fill="#bab800"/>
<rect x="1138" y="621" width="2" height="22" fill="#a8a600"/>
<rect x="1142" y="618" width="5" height="25" fill="#b0ae00"/>
<rect x="1142" y="618" width="5" height="1" fill="#bab800"/>
<rect x="1143" y="619" width="3" height="24" fill="#a8a600"/>
<rect x="1148" y="626" width="4" height="17" fill="#b0ae00"/>
<rect x="1148" y="626" width="4" height="1" fill="#bab800"/>
<rect x="1149" y="627" width="2" height="16" fill="#a8a600"/>
<rect x="1153" y="620" width="5" height="23" fill="#b0ae00"/>
<rect x="1153" y="620" width="5" height="1" fill="#bab800"/>
<rect x="1154" y="621" width="3" height="22" fill="#a8a600"/>
<rect x="1159" y="621" width="4" height="22" fill="#b0ae00"/>
<rect x="1159" y="621" width="4" height="1" fill="#bab800"/>
<rect x="1160" y="622" width="2" height="21" fill="#a8a600"/>
<rect x="1164" y="622" width="5" height="21" fill="#b0ae00"/>
<rect x="1164" y="622" width="5" height="1" fill="#bab800"/>
<rect x="1165" y="623" width="3" height="20" fill="#a8a600"/>
<rect x="1170" y="622" width="4" height="21" fill="#b0ae00"/>
<rect x="1170" y="622" width="4" height="1" fill="#bab800"/>
<rect x="1171" y="623" width="2" height="20" fill="#a8a600"/>
<rect x="1175" y="626" width="5" height="17" fill="#b0ae00"/>
<rect x="1175" y="626" width="5" height="1" fill="#bab800"/>
<rect x="1176" y="627" width="3" height="16" fill="#a8a600"/>
<rect x="1181" y="627" width="4" height="16" fill="#b0ae00"/>
<rect x="1181" y="627" width="4" height="1" fill="#bab800"/>
<rect x="1182" y="628" width="2" height="15" fill="#a8a600"/>
<rect x="1186" y="628" width="5" height="15" fill="#b0ae00"/>
<rect x="1186" y="628" width="5" height="1" fill="#bab800"/>
<rect x="1187" y="629" width="3" height="14" fill="#a8a600"/>
<rect x="1192" y="625" width="4" height="18" fill="#b0ae00"/>
<rect x="1192" y="625" width="4" height="1" fill="#bab800"/>
<rect x="1193" y="626" width="2" height="17" fill="#a8a600"/>
<rect x="1197" y="631" width="5" height="12" fill="#b0ae00"/>
<rect x="1197" y="631" width="5" height="1" fill="#bab800"/>
<rect x="1198" y="632" width="3" height="11" fill="#a8a600"/>
<rect x="1203" y="635" width="4" height="8" fill="#b0ae00"/>
<rect x="1203" y="635" width="4" height="1" fill="#bab800"/>
<rect x="1204" y="636" width="2" height="7" fill="#a8a600"/>
<rect x="1208" y="629" width="4" height="14" fill="#b0ae00"/>
<rect x="1208" y="629" width="4" height="1" fill="#bab800"/>
<rect x="1209" y="630" width="2" height="13" fill="#a8a600"/>
<rect x="1213" y="632" width="5" height="11" fill="#b0ae00"/>
<rect x="1213" y="632" width="5" height="1" fill="#bab800"/>
<rect x="1214" y="633" width="3" height="10" fill="#a8a600"/>
<rect x="1219" y="629" width="4" height="14" fill="#b0ae00"/>
<rect x="1219" y="629" width="4" height="1" fill="#bab800"/>
<rect x="1220" y="630" width="2" height="13" fill="#a8a600"/>
<rect x="1224" y="621" width="5" height="22" fill="#b0ae00"/>
<rect x="1224" y="621" width="5" height="1" fill="#bab800"/>
<rect x="1225" y="622" width="3" height="21" fill="#a8a600"/>
<rect x="1230" y="617" width="4" height="26" fill="#b0ae00"/>
<rect x="1230" y="617" width="4" height="1" fill="#bab800"/>
<rect x="1231" y="618" width="2" height="25" fill="#a8a600"/>
<rect x="1235" y="615" width="5" height="28" fill="#b0ae00"/>
<rect x="1235" y="615" width="5" height="1" fill="#bab800"/>
<rect x="1236" y="616" width="3" height="27" fill="#a8a600"/>
<rect x="1241" y="611" width="4" height="32" fill="#b0ae00"/>
<rect x="1241" y="611" width="4" height="1" fill="#bab800"/>
<rect x="1242" y="612" width="2" height="31" fill="#a8a600"/>
<rect x="1246" y="606" width="5" height="37" fill="#b0ae00"/>
<rect x="1246" y="606" width="5" height="1" fill="#bab800"/>
<rect x="1247" y="607" width="3" height="36" fill="#a8a600"/>
<rect x="1252" y="604" width="4" height="39" fill="#b0ae00"/>
<rect x="1252" y="604" width="4" height="1" fill="#bab800"/>
<rect x="1253" y="605" width="2" height="38" fill="#a8a600"/>
<rect x="1257" y="602" width="5" height="41" fill="#b0ae00"/>
<rect x="1257" y="602" width="5" height="1" fill="#bab800"/>
<rect x="1258" y="603" width="3" height="40" fill="#a8a600"/>
<rect x="1263" y="599" width="4" height="44" fill="#b0ae00"/>
<rect x="1263" y="599" width="4" height="1" fill="#bab800"/>
<rect x="1264" y="600" width="2" height="43" fill="#a8a600"/>
<rect x="1268" y="593" width="5" height="50" fill="#b0ae00"/>
<rect x="1268" y="593" width="5" height="1" fill="#bab800"/>
<rect x="1269" y="594" width="3" height="49" fill="#a8a600"/>
<rect x="1274" y="585" width="4" height="58" fill="#b0ae00"/>
<rect x="1274" y="585" width="4" height="1" fill="#bab800"/>
<rect x="1275" y="586" width="2" height="57" fill="#a8a600"/>
<rect x="1279" y="589" width="5" height="54" fill="#b0ae00"/>
<rect x="1279" y="589" width="5" height="1" fill="#bab800"/>
<rect x="1280" y="590" width="3" height="53" fill="#a8a600"/>
<rect x="1285" y="593" width="4" height="50" fill="#b0ae00"/>
<rect x="1285" y="593" width="4" height="1" fill="#bab800"/>
<rect x="1286" y="594" width="2" height="49" fill="#a8a600"/>
<rect x="1290" y="587" width="5" height="56" fill="#b0ae00"/>
<rect x="1290" y="587" width="5" height="1" fill="#bab800"/>
<rect x="1291" y="588" width="3" height="55" fill="#a8a600"/>
<rect x="1296" y="586" width="4" height="57" fill="#b0ae00"/>
<rect x="1296" y="586" width="4" height="1" fill="#bab800"/>
<rect x="1297" y="587" width="2" height="56" fill="#a8a600"/>
<rect x="1301" y="587" width="5" height="56" fill="#b0ae00"/>
<rect x="1301" y="587" width="5" height="1" fill="#bab800"/>
<rect x="1302" y="588" width="3" height="55" fill="#a8a600"/>
<rect x="1307" y="579" width="4" height="64" fill="#b0ae00"/>
<rect x="1307" y="579" width="4" height="1" fill="#bab800"/>
<rect x="1308" y="580" width="2" height="63" fill="#a8a600"/>
<rect x="1312" y="576" width="5" height="67" fill="#b0ae00"/>
<rect x="1312" y="576" width="5" height="1" fill="#bab800"/>
<rect x="1313" y="577" width="3" height="66" fill="#a8a600"/>
<rect x="1318" y="570" width="4" height="73" fill="#b0ae00"/>
<rect x="1318" y="570" width="4" height="1" fill="#bab800"/>
<rect x="1319" y="571" width="2" height="72" fill="#a8a600"/>
<rect x="1323" y="575" width="5" height="68" fill="#b0ae00"/>
<rect x="1323" y="575" width="5" height="1" fill="#bab800"/>
<rect x="1324" y="576" width="3" height="67" fill="#a8a600"/>
<rect x="1329" y="576" width="4" height="67" fill="#b0ae00"/>
<rect x="1329" y="576" width="4" height="1" fill="#bab800"/>
<rect x="1330" y="577" width="2" height="66" fill="#a8a600"/>
<rect x="1334" y="577" width="5" height="66" fill="#b0ae00"/>
<rect x="1334" y="577" width="5" height="1" fill="#bab800"/>
<rect x="1335" y="578" width="3" height="65" fill="#a8a600"/>
<rect x="1340" y="576" width="4" height="67" fill="#b0ae00"/>
<rect x="1340" y="576" width="4" height="1" fill="#bab800"/>
<rect x="1341" y="577" width="2" height="66" fill="#a8a600"/>
<rect x="1345" y="576" width="5" height="67" fill="#b0ae00"/>
<rect x="1345" y="576" width="5" height="1" fill="#bab800"/>
<rect x="1346" y="577" width="3" height="66" fill="#a8a600"/>
<rect x="1351" y="578" width="4" height="65" fill="#b0ae00"/>
<rect x="1351" y="578" width="4" height="1" fill="#bab800"/>
<rect x="1352" y="579" width="2" height="64" fill="#a8a600"/>
<rect x="1356" y="576" width="5" height="67" fill="#b0ae00"/>
<rect x="1356" y="576" width="5" height="1" fill="#bab800"/>
<rect x="1357" y="577" width="3" height="66" fill="#a8a600"/>
<rect x="1362" y="575" width="4" height="68" fill="#b0ae00"/>
<rect x="1362" y="575" width="4" height="1" fill="#bab800"/>
<rect x="1363" y="576" width="2" height="67" fill="#a8a600"/>
<rect x="1367" y="576" width="5" height="67" fill="#b0ae00"/>
<rect x="1367" y="576" width="5" height="1" fill="#bab800"/>
<rect x="1368" y="577" width="3" height="66" fill="#a8a600"/>
<rect x="1373" y="571" width="4" height="72" fill="#b0ae00"/>
<rect x="1373" y="571" width="4" height="1" fill="#bab800"/>
<rect x="1374" y="572" width="2" height="71" fill="#a8a600"/>
<rect x="1378" y="573" width="5" height="70" fill="#b0ae00"/>
<rect x="1378" y="573" width="5" height="1" fill="#bab800"/>
<rect x="1379" y="574" width="3" height="69" fill="#a8a600"/>
<rect x="1384" y="575" width="4" height="68" fill="#b0ae00"/>
<rect x="1384" y="575" width="4" height="1" fill="#bab800"/>
<rect x="1385" y="576" width="2" height="67" fill="#a8a600"/>
</g>
<polyline points="11.0,777.8 22.5,778.8 85.0,779.0 122.5,779.4 197.5,779.8 237.5,779.4 312.5,779.2 387.5,778.8 427.5,778.8 502.5,778.8 565.0,779.0 592.5,779.0 667.5,778.5 717.5,779.4 755.0,779.8 767.5,779.4 795.7,780.2 821.5,780.5 872.9,780.8 898.6,780.1 917.9,780.8 956.5,779.7 972.9,779.0 1024.3,778.4 1075.8,777.5 1114.4,777.2 1146.5,776.6 1162.9,776.9 1214.3,776.9 1278.6,776.3 1304.4,776.3 1312.5,776.5 1337.5,776.0 1362.5,776.9 1386.2,777.1" fill="none" stroke="#2962ff" stroke-width="1.8" stroke-linejoin="round" stroke-linecap="round" />
<g shape-rendering="crispEdges">
<rect x="11" y="792" width="4" height="13" fill="#1e6524"/>
<rect x="11" y="792" width="4" height="1" fill="#217029"/>
<rect x="12" y="793" width="2" height="12" fill="#1b5e20"/>
<rect x="16" y="788" width="4" height="17" fill="#1e6524"/>
<rect x="16" y="788" width="4" height="1" fill="#217029"/>
<rect x="17" y="789" width="2" height="16" fill="#1b5e20"/>
<rect x="21" y="789" width="5" height="16" fill="#c12424"/>
<rect x="21" y="789" width="5" height="1" fill="#cb2b2b"/>
<rect x="22" y="790" width="3" height="15" fill="#b71c1c"/>
<rect x="27" y="793" width="4" height="12" fill="#1e6524"/>
<rect x="27" y="793" width="4" height="1" fill="#217029"/>
<rect x="28" y="794" width="2" height="11" fill="#1b5e20"/>
<rect x="32" y="789" width="5" height="16" fill="#1e6524"/>
<rect x="32" y="789" width="5" height="1" fill="#217029"/>
<rect x="33" y="790" width="3" height="15" fill="#1b5e20"/>
<rect x="38" y="786" width="4" height="19" fill="#c12424"/>
<rect x="38" y="786" width="4" height="1" fill="#cb2b2b"/>
<rect x="39" y="787" width="2" height="18" fill="#b71c1c"/>
<rect x="43" y="788" width="5" height="17" fill="#c12424"/>
<rect x="43" y="788" width="5" height="1" fill="#cb2b2b"/>
<rect x="44" y="789" width="3" height="16" fill="#b71c1c"/>
<rect x="49" y="786" width="4" height="19" fill="#c12424"/>
<rect x="49" y="786" width="4" height="1" fill="#cb2b2b"/>
<rect x="50" y="787" width="2" height="18" fill="#b71c1c"/>
<rect x="54" y="776" width="5" height="29" fill="#1e6524"/>
<rect x="54" y="776" width="5" height="1" fill="#217029"/>
<rect x="55" y="777" width="3" height="28" fill="#1b5e20"/>
<rect x="60" y="788" width="4" height="17" fill="#1e6524"/>
<rect x="60" y="788" width="4" height="1" fill="#217029"/>
<rect x="61" y="789" width="2" height="16" fill="#1b5e20"/>
<rect x="65" y="780" width="5" height="25" fill="#c12424"/>
<rect x="65" y="780" width="5" height="1" fill="#cb2b2b"/>
<rect x="66" y="781" width="3" height="24" fill="#b71c1c"/>
<rect x="71" y="776" width="4" height="29" fill="#c12424"/>
<rect x="71" y="776" width="4" height="1" fill="#cb2b2b"/>
<rect x="72" y="777" width="2" height="28" fill="#b71c1c"/>
<rect x="76" y="782" width="5" height="23" fill="#c12424"/>
<rect x="76" y="782" width="5" height="1" fill="#cb2b2b"/>
<rect x="77" y="783" width="3" height="22" fill="#b71c1c"/>
<rect x="82" y="786" width="4" height="19" fill="#c12424"/>
<rect x="82" y="786" width="4" height="1" fill="#cb2b2b"/>
<rect x="83" y="787" width="2" height="18" fill="#b71c1c"/>
<rect x="87" y="788" width="5" height="17" fill="#c12424"/>
<rect x="87" y="788" width="5" height="1" fill="#cb2b2b"/>
<rect x="88" y="789" width="3" height="16" fill="#b71c1c"/>
<rect x="93" y="790" width="4" height="15" fill="#c12424"/>
<rect x="93" y="790" width="4" height="1" fill="#cb2b2b"/>
<rect x="94" y="791" width="2" height="14" fill="#b71c1c"/>
<rect x="98" y="789" width="5" height="16" fill="#c12424"/>
<rect x="98" y="789" width="5" height="1" fill="#cb2b2b"/>
<rect x="99" y="790" width="3" height="15" fill="#b71c1c"/>
<rect x="104" y="791" width="4" height="14" fill="#1e6524"/>
<rect x="104" y="791" width="4" height="1" fill="#217029"/>
<rect x="105" y="792" width="2" height="13" fill="#1b5e20"/>
<rect x="109" y="781" width="5" height="24" fill="#1e6524"/>
<rect x="109" y="781" width="5" height="1" fill="#217029"/>
<rect x="110" y="782" width="3" height="23" fill="#1b5e20"/>
<rect x="115" y="787" width="4" height="18" fill="#c12424"/>
<rect x="115" y="787" width="4" height="1" fill="#cb2b2b"/>
<rect x="116" y="788" width="2" height="17" fill="#b71c1c"/>
<rect x="120" y="787" width="5" height="18" fill="#1e6524"/>
<rect x="120" y="787" width="5" height="1" fill="#217029"/>
<rect x="121" y="788" width="3" height="17" fill="#1b5e20"/>
<rect x="126" y="789" width="4" height="16" fill="#c12424"/>
<rect x="126" y="789" width="4" height="1" fill="#cb2b2b"/>
<rect x="127" y="790" width="2" height="15" fill="#b71c1c"/>
<rect x="131" y="787" width="5" height="18" fill="#1e6524"/>
<rect x="131" y="787" width="5" height="1" fill="#217029"/>
<rect x="132" y="788" width="3" height="17" fill="#1b5e20"/>
<rect x="137" y="781" width="4" height="24" fill="#c12424"/>
<rect x="137" y="781" width="4" height="1" fill="#cb2b2b"/>
<rect x="138" y="782" width="2" height="23" fill="#b71c1c"/>
<rect x="142" y="787" width="5" height="18" fill="#1e6524"/>
<rect x="142" y="787" width="5" height="1" fill="#217029"/>
<rect x="143" y="788" width="3" height="17" fill="#1b5e20"/>
<rect x="148" y="793" width="4" height="12" fill="#c12424"/>
<rect x="148" y="793" width="4" height="1" fill="#cb2b2b"/>
<rect x="149" y="794" width="2" height="11" fill="#b71c1c"/>
<rect x="153" y="782" width="5" height="23" fill="#1e6524"/>
<rect x="153" y="782" width="5" height="1" fill="#217029"/>
<rect x="154" y="783" width="3" height="22" fill="#1b5e20"/>
<rect x="159" y="787" width="4" height="18" fill="#c12424"/>
<rect x="159" y="787" width="4" height="1" fill="#cb2b2b"/>
<rect x="160" y="788" width="2" height="17" fill="#b71c1c"/>
<rect x="164" y="776" width="5" height="29" fill="#1e6524"/>
<rect x="164" y="776" width="5" height="1" fill="#217029"/>
<rect x="165" y="777" width="3" height="28" fill="#1b5e20"/>
<rect x="170" y="786" width="4" height="19" fill="#1e6524"/>
<rect x="170" y="786" width="4" height="1" fill="#217029"/>
<rect x="171" y="787" width="2" height="18" fill="#1b5e20"/>
<rect x="175" y="788" width="5" height="17" fill="#c12424"/>
<rect x="175" y="788" width="5" height="1" fill="#cb2b2b"/>
<rect x="176" y="789" width="3" height="16" fill="#b71c1c"/>
<rect x="181" y="790" width="4" height="15" fill="#c12424"/>
<rect x="181" y="790" width="4" height="1" fill="#cb2b2b"/>
<rect x="182" y="791" width="2" height="14" fill="#b71c1c"/>
<rect x="186" y="787" width="5" height="18" fill="#c12424"/>
<rect x="186" y="787" width="5" height="1" fill="#cb2b2b"/>
<rect x="187" y="788" width="3" height="17" fill="#b71c1c"/>
<rect x="192" y="791" width="4" height="14" fill="#1e6524"/>
<rect x="192" y="791" width="4" height="1" fill="#217029"/>
<rect x="193" y="792" width="2" height="13" fill="#1b5e20"/>
<rect x="197" y="773" width="5" height="32" fill="#c12424"/>
<rect x="197" y="773" width="5" height="1" fill="#cb2b2b"/>
<rect x="198" y="774" width="3" height="31" fill="#b71c1c"/>
<rect x="203" y="771" width="4" height="34" fill="#1e6524"/>
<rect x="203" y="771" width="4" height="1" fill="#217029"/>
<rect x="204" y="772" width="2" height="33" fill="#1b5e20"/>
<rect x="208" y="781" width="5" height="24" fill="#1e6524"/>
<rect x="208" y="781" width="5" height="1" fill="#217029"/>
<rect x="209" y="782" width="3" height="23" fill="#1b5e20"/>
<rect x="214" y="780" width="4" height="25" fill="#1e6524"/>
<rect x="214" y="780" width="4" height="1" fill="#217029"/>
<rect x="215" y="781" width="2" height="24" fill="#1b5e20"/>
<rect x="219" y="784" width="5" height="21" fill="#c12424"/>
<rect x="219" y="784" width="5" height="1" fill="#cb2b2b"/>
<rect x="220" y="785" width="3" height="20" fill="#b71c1c"/>
<rect x="225" y="770" width="4" height="35" fill="#c12424"/>
<rect x="225" y="770" width="4" height="1" fill="#cb2b2b"/>
<rect x="226" y="771" width="2" height="34" fill="#b71c1c"/>
<rect x="230" y="786" width="5" height="19" fill="#c12424"/>
<rect x="230" y="786" width="5" height="1" fill="#cb2b2b"/>
<rect x="231" y="787" width="3" height="18" fill="#b71c1c"/>
<rect x="236" y="758" width="4" height="47" fill="#c12424"/>
<rect x="236" y="758" width="4" height="1" fill="#cb2b2b"/>
<rect x="237" y="759" width="2" height="46" fill="#b71c1c"/>
<rect x="241" y="787" width="5" height="18" fill="#c12424"/>
<rect x="241" y="787" width="5" height="1" fill="#cb2b2b"/>
<rect x="242" y="788" width="3" height="17" fill="#b71c1c"/>
<rect x="247" y="783" width="4" height="22" fill="#c12424"/>
<rect x="247" y="783" width="4" height="1" fill="#cb2b2b"/>
<rect x="248" y="784" width="2" height="21" fill="#b71c1c"/>
<rect x="252" y="749" width="4" height="56" fill="#1e6524"/>
<rect x="252" y="749" width="4" height="1" fill="#217029"/>
<rect x="253" y="750" width="2" height="55" fill="#1b5e20"/>
<rect x="257" y="743" width="5" height="62" fill="#1e6524"/>
<rect x="257" y="743" width="5" height="1" fill="#217029"/>
<rect x="258" y="744" width="3" height="61" fill="#1b5e20"/>
<rect x="263" y="778" width="4" height="27" fill="#1e6524"/>
<rect x="263" y="778" width="4" height="1" fill="#217029"/>
<rect x="264" y="779" width="2" height="26" fill="#1b5e20"/>
<rect x="268" y="768" width="5" height="37" fill="#c12424"/>
<rect x="268" y="768" width="5" height="1" fill="#cb2b2b"/>
<rect x="269" y="769" width="3" height="36" fill="#b71c1c"/>
<rect x="274" y="785" width="4" height="20" fill="#1e6524"/>
<rect x="274" y="785" width="4" height="1" fill="#217029"/>
<rect x="275" y="786" width="2" height="19" fill="#1b5e20"/>
<rect x="279" y="782" width="5" height="23" fill="#1e6524"/>
<rect x="279" y="782" width="5" height="1" fill="#217029"/>
<rect x="280" y="783" width="3" height="22" fill="#1b5e20"/>
<rect x="285" y="784" width="4" height="21" fill="#c12424"/>
<rect x="285" y="784" width="4" height="1" fill="#cb2b2b"/>
<rect x="286" y="785" width="2" height="20" fill="#b71c1c"/>
<rect x="290" y="783" width="5" height="22" fill="#1e6524"/>
<rect x="290" y="783" width="5" height="1" fill="#217029"/>
<rect x="291" y="784" width="3" height="21" fill="#1b5e20"/>
<rect x="296" y="776" width="4" height="29" fill="#1e6524"/>
<rect x="296" y="776" width="4" height="1" fill="#217029"/>
<rect x="297" y="777" width="2" height="28" fill="#1b5e20"/>
<rect x="301" y="730" width="5" height="75" fill="#1e6524"/>
<rect x="301" y="730" width="5" height="1" fill="#217029"/>
<rect x="302" y="731" width="3" height="74" fill="#1b5e20"/>
<rect x="307" y="764" width="4" height="41" fill="#1e6524"/>
<rect x="307" y="764" width="4" height="1" fill="#217029"/>
<rect x="308" y="765" width="2" height="40" fill="#1b5e20"/>
<rect x="312" y="775" width="5" height="30" fill="#c12424"/>
<rect x="312" y="775" width="5" height="1" fill="#cb2b2b"/>
<rect x="313" y="776" width="3" height="29" fill="#b71c1c"/>
<rect x="318" y="780" width="4" height="25" fill="#1e6524"/>
<rect x="318" y="780" width="4" height="1" fill="#217029"/>
<rect x="319" y="781" width="2" height="24" fill="#1b5e20"/>
<rect x="323" y="787" width="5" height="18" fill="#1e6524"/>
<rect x="323" y="787" width="5" height="1" fill="#217029"/>
<rect x="324" y="788" width="3" height="17" fill="#1b5e20"/>
<rect x="329" y="768" width="4" height="37" fill="#c12424"/>
<rect x="329" y="768" width="4" height="1" fill="#cb2b2b"/>
<rect x="330" y="769" width="2" height="36" fill="#b71c1c"/>
<rect x="334" y="787" width="5" height="18" fill="#c12424"/>
<rect x="334" y="787" width="5" height="1" fill="#cb2b2b"/>
<rect x="335" y="788" width="3" height="17" fill="#b71c1c"/>
<rect x="340" y="768" width="4" height="37" fill="#c12424"/>
<rect x="340" y="768" width="4" height="1" fill="#cb2b2b"/>
<rect x="341" y="769" width="2" height="36" fill="#b71c1c"/>
<rect x="345" y="766" width="5" height="39" fill="#1e6524"/>
<rect x="345" y="766" width="5" height="1" fill="#217029"/>
<rect x="346" y="767" width="3" height="38" fill="#1b5e20"/>
<rect x="351" y="777" width="4" height="28" fill="#c12424"/>
<rect x="351" y="777" width="4" height="1" fill="#cb2b2b"/>
<rect x="352" y="778" width="2" height="27" fill="#b71c1c"/>
<rect x="356" y="787" width="5" height="18" fill="#1e6524"/>
<rect x="356" y="787" width="5" height="1" fill="#217029"/>
<rect x="357" y="788" width="3" height="17" fill="#1b5e20"/>
<rect x="362" y="776" width="4" height="29" fill="#c12424"/>
<rect x="362" y="776" width="4" height="1" fill="#cb2b2b"/>
<rect x="363" y="777" width="2" height="28" fill="#b71c1c"/>
<rect x="367" y="733" width="5" height="72" fill="#1e6524"/>
<rect x="367" y="733" width="5" height="1" fill="#217029"/>
<rect x="368" y="734" width="3" height="71" fill="#1b5e20"/>
<rect x="373" y="768" width="4" height="37" fill="#c12424"/>
<rect x="373" y="768" width="4" height="1" fill="#cb2b2b"/>
<rect x="374" y="769" width="2" height="36" fill="#b71c1c"/>
<rect x="378" y="775" width="5" height="30" fill="#1e6524"/>
<rect x="378" y="775" width="5" height="1" fill="#217029"/>
<rect x="379" y="776" width="3" height="29" fill="#1b5e20"/>
<rect x="384" y="785" width="4" height="20" fill="#1e6524"/>
<rect x="384" y="785" width="4" height="1" fill="#217029"/>
<rect x="385" y="786" width="2" height="19" fill="#1b5e20"/>
<rect x="389" y="783" width="5" height="22" fill="#c12424"/>
<rect x="389" y="783" width="5" height="1" fill="#cb2b2b"/>
<rect x="390" y="784" width="3" height="21" fill="#b71c1c"/>
<rect x="395" y="788" width="4" height="17" fill="#1e6524"/>
<rect x="395" y="788" width="4" height="1" fill="#217029"/>
<rect x="396" y="789" width="2" height="16" fill="#1b5e20"/>
<rect x="400" y="769" width="5" height="36" fill="#c12424"/>
<rect x="400" y="769" width="5" height="1" fill="#cb2b2b"/>
<rect x="401" y="770" width="3" height="35" fill="#b71c1c"/>
<rect x="406" y="773" width="4" height="32" fill="#1e6524"/>
<rect x="406" y="773" width="4" height="1" fill="#217029"/>
<rect x="407" y="774" width="2" height="31" fill="#1b5e20"/>
<rect x="411" y="769" width="5" height="36" fill="#c12424"/>
<rect x="411" y="769" width="5" height="1" fill="#cb2b2b"/>
<rect x="412" y="770" width="3" height="35" fill="#b71c1c"/>
<rect x="417" y="768" width="4" height="37" fill="#1e6524"/>
<rect x="417" y="768" width="4" height="1" fill="#217029"/>
<rect x="418" y="769" width="2" height="36" fill="#1b5e20"/>
<rect x="422" y="771" width="5" height="34" fill="#c12424"/>
<rect x="422" y="771" width="5" height="1" fill="#cb2b2b"/>
<rect x="423" y="772" width="3" height="33" fill="#b71c1c"/>
<rect x="428" y="779" width="4" height="26" fill="#1e6524"/>
<rect x="428" y="779" width="4" height="1" fill="#217029"/>
<rect x="429" y="780" width="2" height="25" fill="#1b5e20"/>
<rect x="433" y="784" width="5" height="21" fill="#1e6524"/>
<rect x="433" y="784" width="5" height="1" fill="#217029"/>
<rect x="434" y="785" width="3" height="20" fill="#1b5e20"/>
<rect x="439" y="791" width="4" height="14" fill="#1e6524"/>
<rect x="439" y="791" width="4" height="1" fill="#217029"/>
<rect x="440" y="792" width="2" height="13" fill="#1b5e20"/>
<rect x="444" y="789" width="5" height="16" fill="#1e6524"/>
<rect x="444" y="789" width="5" height="1" fill="#217029"/>
<rect x="445" y="790" width="3" height="15" fill="#1b5e20"/>
<rect x="450" y="794" width="4" height="11" fill="#1e6524"/>
<rect x="450" y="794" width="4" height="1" fill="#217029"/>
<rect x="451" y="795" width="2" height="10" fill="#1b5e20"/>
<rect x="455" y="791" width="5" height="14" fill="#1e6524"/>
<rect x="455" y="791" width="5" height="1" fill="#217029"/>
<rect x="456" y="792" width="3" height="13" fill="#1b5e20"/>
<rect x="461" y="787" width="4" height="18" fill="#1e6524"/>
<rect x="461" y="787" width="4" height="1" fill="#217029"/>
<rect x="462" y="788" width="2" height="17" fill="#1b5e20"/>
<rect x="466" y="783" width="5" height="22" fill="#1e6524"/>
<rect x="466" y="783" width="5" height="1" fill="#217029"/>
<rect x="467" y="784" width="3" height="21" fill="#1b5e20"/>
<rect x="472" y="779" width="4" height="26" fill="#1e6524"/>
<rect x="472" y="779" width="4" height="1" fill="#217029"/>
<rect x="473" y="780" width="2" height="25" fill="#1b5e20"/>
<rect x="477" y="786" width="5" height="19" fill="#c12424"/>
<rect x="477" y="786" width="5" height="1" fill="#cb2b2b"/>
<rect x="478" y="787" width="3" height="18" fill="#b71c1c"/>
<rect x="483" y="777" width="4" height="28" fill="#1e6524"/>
<rect x="483" y="777" width="4" height="1" fill="#217029"/>
<rect x="484" y="778" width="2" height="27" fill="#1b5e20"/>
<rect x="488" y="783" width="5" height="22" fill="#c12424"/>
<rect x="488" y="783" width="5" height="1" fill="#cb2b2b"/>
<rect x="489" y="784" width="3" height="21" fill="#b71c1c"/>
<rect x="494" y="790" width="4" height="15" fill="#1e6524"/>
<rect x="494" y="790" width="4" height="1" fill="#217029"/>
<rect x="495" y="791" width="2" height="14" fill="#1b5e20"/>
<rect x="499" y="785" width="5" height="20" fill="#c12424"/>
<rect x="499" y="785" width="5" height="1" fill="#cb2b2b"/>
<rect x="500" y="786" width="3" height="19" fill="#b71c1c"/>
<rect x="505" y="792" width="4" height="13" fill="#c12424"/>
<rect x="505" y="792" width="4" height="1" fill="#cb2b2b"/>
<rect x="506" y="793" width="2" height="12" fill="#b71c1c"/>
<rect x="510" y="793" width="5" height="12" fill="#c12424"/>
<rect x="510" y="793" width="5" height="1" fill="#cb2b2b"/>
<rect x="511" y="794" width="3" height="11" fill="#b71c1c"/>
<rect x="516" y="789" width="4" height="16" fill="#1e6524"/>
<rect x="516" y="789" width="4" height="1" fill="#217029"/>
<rect x="517" y="790" width="2" height="15" fill="#1b5e20"/>
<rect x="521" y="791" width="5" height="14" fill="#c12424"/>
<rect x="521" y="791" width="5" height="1" fill="#cb2b2b"/>
<rect x="522" y="792" width="3" height="13" fill="#b71c1c"/>
<rect x="527" y="792" width="4" height="13" fill="#1e6524"/>
<rect x="527" y="792" width="4" height="1" fill="#217029"/>
<rect x="528" y="793" width="2" height="12" fill="#1b5e20"/>
<rect x="532" y="793" width="5" height="12" fill="#1e6524"/>
<rect x="532" y="793" width="5" height="1" fill="#217029"/>
<rect x="533" y="794" width="3" height="11" fill="#1b5e20"/>
<rect x="538" y="784" width="4" height="21" fill="#c12424"/>
<rect x="538" y="784" width="4" height="1" fill="#cb2b2b"/>
<rect x="539" y="785" width="2" height="20" fill="#b71c1c"/>
<rect x="543" y="792" width="5" height="13" fill="#1e6524"/>
<rect x="543" y="792" width="5" height="1" fill="#217029"/>
<rect x="544" y="793" width="3" height="12" fill="#1b5e20"/>
<rect x="549" y="793" width="4" height="12" fill="#c12424"/>
<rect x="549" y="793" width="4" height="1" fill="#cb2b2b"/>
<rect x="550" y="794" width="2" height="11" fill="#b71c1c"/>
<rect x="554" y="791" width="5" height="14" fill="#c12424"/>
<rect x="554" y="791" width="5" height="1" fill="#cb2b2b"/>
<rect x="555" y="792" width="3" height="13" fill="#b71c1c"/>
<rect x="560" y="793" width="4" height="12" fill="#1e6524"/>
<rect x="560" y="793" width="4" height="1" fill="#217029"/>
<rect x="561" y="794" width="2" height="11" fill="#1b5e20"/>
<rect x="565" y="794" width="5" height="11" fill="#1e6524"/>
<rect x="565" y="794" width="5" height="1" fill="#217029"/>
<rect x="566" y="795" width="3" height="10" fill="#1b5e20"/>
<rect x="571" y="794" width="4" height="11" fill="#c12424"/>
<rect x="571" y="794" width="4" height="1" fill="#cb2b2b"/>
<rect x="572" y="795" width="2" height="10" fill="#b71c1c"/>
<rect x="576" y="787" width="5" height="18" fill="#c12424"/>
<rect x="576" y="787" width="5" height="1" fill="#cb2b2b"/>
<rect x="577" y="788" width="3" height="17" fill="#b71c1c"/>
<rect x="582" y="789" width="4" height="16" fill="#c12424"/>
<rect x="582" y="789" width="4" height="1" fill="#cb2b2b"/>
<rect x="583" y="790" width="2" height="15" fill="#b71c1c"/>
<rect x="587" y="791" width="5" height="14" fill="#1e6524"/>
<rect x="587" y="791" width="5" height="1" fill="#217029"/>
<rect x="588" y="792" width="3" height="13" fill="#1b5e20"/>
<rect x="593" y="783" width="4" height="22" fill="#c12424"/>
<rect x="593" y="783" width="4" height="1" fill="#cb2b2b"/>
<rect x="594" y="784" width="2" height="21" fill="#b71c1c"/>
<rect x="598" y="792" width="5" height="13" fill="#c12424"/>
<rect x="598" y="792" width="5" height="1" fill="#cb2b2b"/>
<rect x="599" y="793" width="3" height="12" fill="#b71c1c"/>
<rect x="604" y="794" width="4" height="11" fill="#c12424"/>
<rect x="604" y="794" width="4" height="1" fill="#cb2b2b"/>
<rect x="605" y="795" width="2" height="10" fill="#b71c1c"/>
<rect x="609" y="787" width="5" height="18" fill="#c12424"/>
<rect x="609" y="787" width="5" height="1" fill="#cb2b2b"/>
<rect x="610" y="788" width="3" height="17" fill="#b71c1c"/>
<rect x="615" y="786" width="4" height="19" fill="#c12424"/>
<rect x="615" y="786" width="4" height="1" fill="#cb2b2b"/>
<rect x="616" y="787" width="2" height="18" fill="#b71c1c"/>
<rect x="620" y="781" width="5" height="24" fill="#1e6524"/>
<rect x="620" y="781" width="5" height="1" fill="#217029"/>
<rect x="621" y="782" width="3" height="23" fill="#1b5e20"/>
<rect x="626" y="771" width="4" height="34" fill="#1e6524"/>
<rect x="626" y="771" width="4" height="1" fill="#217029"/>
<rect x="627" y="772" width="2" height="33" fill="#1b5e20"/>
<rect x="631" y="787" width="5" height="18" fill="#c12424"/>
<rect x="631" y="787" width="5" height="1" fill="#cb2b2b"/>
<rect x="632" y="788" width="3" height="17" fill="#b71c1c"/>
<rect x="637" y="790" width="4" height="15" fill="#1e6524"/>
<rect x="637" y="790" width="4" height="1" fill="#217029"/>
<rect x="638" y="791" width="2" height="14" fill="#1b5e20"/>
<rect x="642" y="793" width="5" height="12" fill="#c12424"/>
<rect x="642" y="793" width="5" height="1" fill="#cb2b2b"/>
<rect x="643" y="794" width="3" height="11" fill="#b71c1c"/>
<rect x="648" y="786" width="4" height="19" fill="#1e6524"/>
<rect x="648" y="786" width="4" height="1" fill="#217029"/>
<rect x="649" y="787" width="2" height="18" fill="#1b5e20"/>
<rect x="653" y="789" width="5" height="16" fill="#c12424"/>
<rect x="653" y="789" width="5" height="1" fill="#cb2b2b"/>
<rect x="654" y="790" width="3" height="15" fill="#b71c1c"/>
<rect x="659" y="794" width="4" height="11" fill="#c12424"/>
<rect x="659" y="794" width="4" height="1" fill="#cb2b2b"/>
<rect x="660" y="795" width="2" height="10" fill="#b71c1c"/>
<rect x="664" y="786" width="5" height="19" fill="#c12424"/>
<rect x="664" y="786" width="5" height="1" fill="#cb2b2b"/>
<rect x="665" y="787" width="3" height="18" fill="#b71c1c"/>
<rect x="670" y="795" width="4" height="10" fill="#1e6524"/>
<rect x="670" y="795" width="4" height="1" fill="#217029"/>
<rect x="671" y="796" width="2" height="9" fill="#1b5e20"/>
<rect x="675" y="794" width="5" height="11" fill="#c12424"/>
<rect x="675" y="794" width="5" height="1" fill="#cb2b2b"/>
<rect x="676" y="795" width="3" height="10" fill="#b71c1c"/>
<rect x="681" y="793" width="4" height="12" fill="#c12424"/>
<rect x="681" y="793" width="4" height="1" fill="#cb2b2b"/>
<rect x="682" y="794" width="2" height="11" fill="#b71c1c"/>
<rect x="686" y="794" width="5" height="11" fill="#c12424"/>
<rect x="686" y="794" width="5" height="1" fill="#cb2b2b"/>
<rect x="687" y="795" width="3" height="10" fill="#b71c1c"/>
<rect x="692" y="791" width="4" height="14" fill="#1e6524"/>
<rect x="692" y="791" width="4" height="1" fill="#217029"/>
<rect x="693" y="792" width="2" height="13" fill="#1b5e20"/>
<rect x="697" y="790" width="5" height="15" fill="#1e6524"/>
<rect x="697" y="790" width="5" height="1" fill="#217029"/>
<rect x="698" y="791" width="3" height="14" fill="#1b5e20"/>
<rect x="703" y="795" width="4" height="10" fill="#c12424"/>
<rect x="703" y="795" width="4" height="1" fill="#cb2b2b"/>
<rect x="704" y="796" width="2" height="9" fill="#b71c1c"/>
<rect x="708" y="789" width="5" height="16" fill="#c12424"/>
<rect x="708" y="789" width="5" height="1" fill="#cb2b2b"/>
<rect x="709" y="790" width="3" height="15" fill="#b71c1c"/>
<rect x="714" y="775" width="4" height="30" fill="#1e6524"/>
<rect x="714" y="775" width="4" height="1" fill="#217029"/>
<rect x="715" y="776" width="2" height="29" fill="#1b5e20"/>
<rect x="719" y="793" width="5" height="12" fill="#c12424"/>
<rect x="719" y="793" width="5" height="1" fill="#cb2b2b"/>
<rect x="720" y="794" width="3" height="11" fill="#b71c1c"/>
<rect x="725" y="783" width="4" height="22" fill="#1e6524"/>
<rect x="725" y="783" width="4" height="1" fill="#217029"/>
<rect x="726" y="784" width="2" height="21" fill="#1b5e20"/>
<rect x="730" y="794" width="4" height="11" fill="#c12424"/>
<rect x="730" y="794" width="4" height="1" fill="#cb2b2b"/>
<rect x="731" y="795" width="2" height="10" fill="#b71c1c"/>
<rect x="735" y="797" width="5" height="8" fill="#1e6524"/>
<rect x="735" y="797" width="5" height="1" fill="#217029"/>
<rect x="736" y="798" width="3" height="7" fill="#1b5e20"/>
<rect x="741" y="792" width="4" height="13" fill="#c12424"/>
<rect x="741" y="792" width="4" height="1" fill="#cb2b2b"/>
<rect x="742" y="793" width="2" height="12" fill="#b71c1c"/>
<rect x="746" y="785" width="5" height="20" fill="#1e6524"/>
<rect x="746" y="785" width="5" height="1" fill="#217029"/>
<rect x="747" y="786" width="3" height="19" fill="#1b5e20"/>
<rect x="752" y="792" width="4" height="13" fill="#c12424"/>
<rect x="752" y="792" width="4" height="1" fill="#cb2b2b"/>
<rect x="753" y="793" width="2" height="12" fill="#b71c1c"/>
<rect x="757" y="771" width="5" height="34" fill="#1e6524"/>
<rect x="757" y="771" width="5" height="1" fill="#217029"/>
<rect x="758" y="772" width="3" height="33" fill="#1b5e20"/>
<rect x="763" y="740" width="4" height="65" fill="#1e6524"/>
<rect x="763" y="740" width="4" height="1" fill="#217029"/>
<rect x="764" y="741" width="2" height="64" fill="#1b5e20"/>
<rect x="768" y="748" width="5" height="57" fill="#1e6524"/>
<rect x="768" y="748" width="5" height="1" fill="#217029"/>
<rect x="769" y="749" width="3" height="56" fill="#1b5e20"/>
<rect x="774" y="774" width="4" height="31" fill="#1e6524"/>
<rect x="774" y="774" width="4" height="1" fill="#217029"/>
<rect x="775" y="775" width="2" height="30" fill="#1b5e20"/>
<rect x="779" y="772" width="5" height="33" fill="#c12424"/>
<rect x="779" y="772" width="5" height="1" fill="#cb2b2b"/>
<rect x="780" y="773" width="3" height="32" fill="#b71c1c"/>
<rect x="785" y="751" width="4" height="54" fill="#1e6524"/>
<rect x="785" y="751" width="4" height="1" fill="#217029"/>
<rect x="786" y="752" width="2" height="53" fill="#1b5e20"/>
<rect x="790" y="769" width="5" height="36" fill="#1e6524"/>
<rect x="790" y="769" width="5" height="1" fill="#217029"/>
<rect x="791" y="770" width="3" height="35" fill="#1b5e20"/>
<rect x="796" y="777" width="4" height="28" fill="#1e6524"/>
<rect x="796" y="777" width="4" height="1" fill="#217029"/>
<rect x="797" y="778" width="2" height="27" fill="#1b5e20"/>
<rect x="801" y="744" width="5" height="61" fill="#1e6524"/>
<rect x="801" y="744" width="5" height="1" fill="#217029"/>
<rect x="802" y="745" width="3" height="60" fill="#1b5e20"/>
<rect x="807" y="755" width="4" height="50" fill="#c12424"/>
<rect x="807" y="755" width="4" height="1" fill="#cb2b2b"/>
<rect x="808" y="756" width="2" height="49" fill="#b71c1c"/>
<rect x="812" y="775" width="5" height="30" fill="#c12424"/>
<rect x="812" y="775" width="5" height="1" fill="#cb2b2b"/>
<rect x="813" y="776" width="3" height="29" fill="#b71c1c"/>
<rect x="818" y="777" width="4" height="28" fill="#1e6524"/>
<rect x="818" y="777" width="4" height="1" fill="#217029"/>
<rect x="819" y="778" width="2" height="27" fill="#1b5e20"/>
<rect x="823" y="785" width="5" height="20" fill="#c12424"/>
<rect x="823" y="785" width="5" height="1" fill="#cb2b2b"/>
<rect x="824" y="786" width="3" height="19" fill="#b71c1c"/>
<rect x="829" y="787" width="4" height="18" fill="#c12424"/>
<rect x="829" y="787" width="4" height="1" fill="#cb2b2b"/>
<rect x="830" y="788" width="2" height="17" fill="#b71c1c"/>
<rect x="834" y="786" width="5" height="19" fill="#c12424"/>
<rect x="834" y="786" width="5" height="1" fill="#cb2b2b"/>
<rect x="835" y="787" width="3" height="18" fill="#b71c1c"/>
<rect x="840" y="744" width="4" height="61" fill="#1e6524"/>
<rect x="840" y="744" width="4" height="1" fill="#217029"/>
<rect x="841" y="745" width="2" height="60" fill="#1b5e20"/>
<rect x="845" y="767" width="5" height="38" fill="#1e6524"/>
<rect x="845" y="767" width="5" height="1" fill="#217029"/>
<rect x="846" y="768" width="3" height="37" fill="#1b5e20"/>
<rect x="851" y="762" width="4" height="43" fill="#c12424"/>
<rect x="851" y="762" width="4" height="1" fill="#cb2b2b"/>
<rect x="852" y="763" width="2" height="42" fill="#b71c1c"/>
<rect x="856" y="779" width="5" height="26" fill="#c12424"/>
<rect x="856" y="779" width="5" height="1" fill="#cb2b2b"/>
<rect x="857" y="780" width="3" height="25" fill="#b71c1c"/>
<rect x="862" y="779" width="4" height="26" fill="#1e6524"/>
<rect x="862" y="779" width="4" height="1" fill="#217029"/>
<rect x="863" y="780" width="2" height="25" fill="#1b5e20"/>
<rect x="867" y="792" width="5" height="13" fill="#1e6524"/>
<rect x="867" y="792" width="5" height="1" fill="#217029"/>
<rect x="868" y="793" width="3" height="12" fill="#1b5e20"/>
<rect x="873" y="788" width="4" height="17" fill="#1e6524"/>
<rect x="873" y="788" width="4" height="1" fill="#217029"/>
<rect x="874" y="789" width="2" height="16" fill="#1b5e20"/>
<rect x="878" y="788" width="5" height="17" fill="#c12424"/>
<rect x="878" y="788" width="5" height="1" fill="#cb2b2b"/>
<rect x="879" y="789" width="3" height="16" fill="#b71c1c"/>
<rect x="884" y="756" width="4" height="49" fill="#c12424"/>
<rect x="884" y="756" width="4" height="1" fill="#cb2b2b"/>
<rect x="885" y="757" width="2" height="48" fill="#b71c1c"/>
<rect x="889" y="788" width="5" height="17" fill="#1e6524"/>
<rect x="889" y="788" width="5" height="1" fill="#217029"/>
<rect x="890" y="789" width="3" height="16" fill="#1b5e20"/>
<rect x="895" y="785" width="4" height="20" fill="#c12424"/>
<rect x="895" y="785" width="4" height="1" fill="#cb2b2b"/>
<rect x="896" y="786" width="2" height="19" fill="#b71c1c"/>
<rect x="900" y="775" width="5" height="30" fill="#1e6524"/>
<rect x="900" y="775" width="5" height="1" fill="#217029"/>
<rect x="901" y="776" width="3" height="29" fill="#1b5e20"/>
<rect x="906" y="783" width="4" height="22" fill="#c12424"/>
<rect x="906" y="783" width="4" height="1" fill="#cb2b2b"/>
<rect x="907" y="784" width="2" height="21" fill="#b71c1c"/>
<rect x="911" y="763" width="5" height="42" fill="#1e6524"/>
<rect x="911" y="763" width="5" height="1" fill="#217029"/>
<rect x="912" y="764" width="3" height="41" fill="#1b5e20"/>
<rect x="917" y="783" width="4" height="22" fill="#1e6524"/>
<rect x="917" y="783" width="4" height="1" fill="#217029"/>
<rect x="918" y="784" width="2" height="21" fill="#1b5e20"/>
<rect x="922" y="737" width="5" height="68" fill="#1e6524"/>
<rect x="922" y="737" width="5" height="1" fill="#217029"/>
<rect x="923" y="738" width="3" height="67" fill="#1b5e20"/>
<rect x="928" y="697" width="4" height="108" fill="#1e6524"/>
<rect x="928" y="697" width="4" height="1" fill="#217029"/>
<rect x="929" y="698" width="2" height="107" fill="#1b5e20"/>
<rect x="933" y="733" width="5" height="72" fill="#c12424"/>
<rect x="933" y="733" width="5" height="1" fill="#cb2b2b"/>
<rect x="934" y="734" width="3" height="71" fill="#b71c1c"/>
<rect x="939" y="738" width="4" height="67" fill="#1e6524"/>
<rect x="939" y="738" width="4" height="1" fill="#217029"/>
<rect x="940" y="739" width="2" height="66" fill="#1b5e20"/>
<rect x="944" y="763" width="5" height="42" fill="#c12424"/>
<rect x="944" y="763" width="5" height="1" fill="#cb2b2b"/>
<rect x="945" y="764" width="3" height="41" fill="#b71c1c"/>
<rect x="950" y="770" width="4" height="35" fill="#c12424"/>
<rect x="950" y="770" width="4" height="1" fill="#cb2b2b"/>
<rect x="951" y="771" width="2" height="34" fill="#b71c1c"/>
<rect x="955" y="778" width="5" height="27" fill="#c12424"/>
<rect x="955" y="778" width="5" height="1" fill="#cb2b2b"/>
<rect x="956" y="779" width="3" height="26" fill="#b71c1c"/>
<rect x="961" y="748" width="4" height="57" fill="#1e6524"/>
<rect x="961" y="748" width="4" height="1" fill="#217029"/>
<rect x="962" y="749" width="2" height="56" fill="#1b5e20"/>
<rect x="966" y="763" width="5" height="42" fill="#c12424"/>
<rect x="966" y="763" width="5" height="1" fill="#cb2b2b"/>
<rect x="967" y="764" width="3" height="41" fill="#b71c1c"/>
<rect x="972" y="771" width="4" height="34" fill="#1e6524"/>
<rect x="972" y="771" width="4" height="1" fill="#217029"/>
<rect x="973" y="772" width="2" height="33" fill="#1b5e20"/>
<rect x="977" y="777" width="5" height="28" fill="#c12424"/>
<rect x="977" y="777" width="5" height="1" fill="#cb2b2b"/>
<rect x="978" y="778" width="3" height="27" fill="#b71c1c"/>
<rect x="983" y="767" width="4" height="38" fill="#1e6524"/>
<rect x="983" y="767" width="4" height="1" fill="#217029"/>
<rect x="984" y="768" width="2" height="37" fill="#1b5e20"/>
<rect x="988" y="779" width="5" height="26" fill="#1e6524"/>
<rect x="988" y="779" width="5" height="1" fill="#217029"/>
<rect x="989" y="780" width="3" height="25" fill="#1b5e20"/>
<rect x="994" y="696" width="4" height="109" fill="#c12424"/>
<rect x="994" y="696" width="4" height="1" fill="#cb2b2b"/>
<rect x="995" y="697" width="2" height="108" fill="#b71c1c"/>
<rect x="999" y="761" width="5" height="44" fill="#1e6524"/>
<rect x="999" y="761" width="5" height="1" fill="#217029"/>
<rect x="1000" y="762" width="3" height="43" fill="#1b5e20"/>
<rect x="1005" y="770" width="4" height="35" fill="#1e6524"/>
<rect x="1005" y="770" width="4" height="1" fill="#217029"/>
<rect x="1006" y="771" width="2" height="34" fill="#1b5e20"/>
<rect x="1010" y="773" width="5" height="32" fill="#1e6524"/>
<rect x="1010" y="773" width="5" height="1" fill="#217029"/>
<rect x="1011" y="774" width="3" height="31" fill="#1b5e20"/>
<rect x="1016" y="745" width="4" height="60" fill="#1e6524"/>
<rect x="1016" y="745" width="4" height="1" fill="#217029"/>
<rect x="1017" y="746" width="2" height="59" fill="#1b5e20"/>
<rect x="1021" y="748" width="5" height="57" fill="#1e6524"/>
<rect x="1021" y="748" width="5" height="1" fill="#217029"/>
<rect x="1022" y="749" width="3" height="56" fill="#1b5e20"/>
<rect x="1027" y="769" width="4" height="36" fill="#1e6524"/>
<rect x="1027" y="769" width="4" height="1" fill="#217029"/>
<rect x="1028" y="770" width="2" height="35" fill="#1b5e20"/>
<rect x="1032" y="768" width="5" height="37" fill="#c12424"/>
<rect x="1032" y="768" width="5" height="1" fill="#cb2b2b"/>
<rect x="1033" y="769" width="3" height="36" fill="#b71c1c"/>
<rect x="1038" y="745" width="4" height="60" fill="#c12424"/>
<rect x="1038" y="745" width="4" height="1" fill="#cb2b2b"/>
<rect x="1039" y="746" width="2" height="59" fill="#b71c1c"/>
<rect x="1043" y="768" width="5" height="37" fill="#1e6524"/>
<rect x="1043" y="768" width="5" height="1" fill="#217029"/>
<rect x="1044" y="769" width="3" height="36" fill="#1b5e20"/>
<rect x="1049" y="769" width="4" height="36" fill="#1e6524"/>
<rect x="1049" y="769" width="4" height="1" fill="#217029"/>
<rect x="1050" y="770" width="2" height="35" fill="#1b5e20"/>
<rect x="1054" y="762" width="5" height="43" fill="#1e6524"/>
<rect x="1054" y="762" width="5" height="1" fill="#217029"/>
<rect x="1055" y="763" width="3" height="42" fill="#1b5e20"/>
<rect x="1060" y="762" width="4" height="43" fill="#c12424"/>
<rect x="1060" y="762" width="4" height="1" fill="#cb2b2b"/>
<rect x="1061" y="763" width="2" height="42" fill="#b71c1c"/>
<rect x="1065" y="775" width="5" height="30" fill="#1e6524"/>
<rect x="1065" y="775" width="5" height="1" fill="#217029"/>
<rect x="1066" y="776" width="3" height="29" fill="#1b5e20"/>
<rect x="1071" y="755" width="4" height="50" fill="#1e6524"/>
<rect x="1071" y="755" width="4" height="1" fill="#217029"/>
<rect x="1072" y="756" width="2" height="49" fill="#1b5e20"/>
<rect x="1076" y="778" width="5" height="27" fill="#c12424"/>
<rect x="1076" y="778" width="5" height="1" fill="#cb2b2b"/>
<rect x="1077" y="779" width="3" height="26" fill="#b71c1c"/>
<rect x="1082" y="765" width="4" height="40" fill="#1e6524"/>
<rect x="1082" y="765" width="4" height="1" fill="#217029"/>
<rect x="1083" y="766" width="2" height="39" fill="#1b5e20"/>
<rect x="1087" y="773" width="5" height="32" fill="#c12424"/>
<rect x="1087" y="773" width="5" height="1" fill="#cb2b2b"/>
<rect x="1088" y="774" width="3" height="31" fill="#b71c1c"/>
<rect x="1093" y="776" width="4" height="29" fill="#c12424"/>
<rect x="1093" y="776" width="4" height="1" fill="#cb2b2b"/>
<rect x="1094" y="777" width="2" height="28" fill="#b71c1c"/>
<rect x="1098" y="770" width="5" height="35" fill="#c12424"/>
<rect x="1098" y="770" width="5" height="1" fill="#cb2b2b"/>
<rect x="1099" y="771" width="3" height="34" fill="#b71c1c"/>
<rect x="1104" y="770" width="4" height="35" fill="#1e6524"/>
<rect x="1104" y="770" width="4" height="1" fill="#217029"/>
<rect x="1105" y="771" width="2" height="34" fill="#1b5e20"/>
<rect x="1109" y="775" width="5" height="30" fill="#c12424"/>
<rect x="1109" y="775" width="5" height="1" fill="#cb2b2b"/>
<rect x="1110" y="776" width="3" height="29" fill="#b71c1c"/>
<rect x="1115" y="747" width="4" height="58" fill="#c12424"/>
<rect x="1115" y="747" width="4" height="1" fill="#cb2b2b"/>
<rect x="1116" y="748" width="2" height="57" fill="#b71c1c"/>
<rect x="1120" y="775" width="5" height="30" fill="#1e6524"/>
<rect x="1120" y="775" width="5" height="1" fill="#217029"/>
<rect x="1121" y="776" width="3" height="29" fill="#1b5e20"/>
<rect x="1126" y="778" width="4" height="27" fill="#c12424"/>
<rect x="1126" y="778" width="4" height="1" fill="#cb2b2b"/>
<rect x="1127" y="779" width="2" height="26" fill="#b71c1c"/>
<rect x="1131" y="786" width="5" height="19" fill="#c12424"/>
<rect x="1131" y="786" width="5" height="1" fill="#cb2b2b"/>
<rect x="1132" y="787" width="3" height="18" fill="#b71c1c"/>
<rect x="1137" y="747" width="4" height="58" fill="#1e6524"/>
<rect x="1137" y="747" width="4" height="1" fill="#217029"/>
<rect x="1138" y="748" width="2" height="57" fill="#1b5e20"/>
<rect x="1142" y="769" width="5" height="36" fill="#1e6524"/>
<rect x="1142" y="769" width="5" height="1" fill="#217029"/>
<rect x="1143" y="770" width="3" height="35" fill="#1b5e20"/>
<rect x="1148" y="780" width="4" height="25" fill="#1e6524"/>
<rect x="1148" y="780" width="4" height="1" fill="#217029"/>
<rect x="1149" y="781" width="2" height="24" fill="#1b5e20"/>
<rect x="1153" y="788" width="5" height="17" fill="#c12424"/>
<rect x="1153" y="788" width="5" height="1" fill="#cb2b2b"/>
<rect x="1154" y="789" width="3" height="16" fill="#b71c1c"/>
<rect x="1159" y="780" width="4" height="25" fill="#c12424"/>
<rect x="1159" y="780" width="4" height="1" fill="#cb2b2b"/>
<rect x="1160" y="781" width="2" height="24" fill="#b71c1c"/>
<rect x="1164" y="791" width="5" height="14" fill="#c12424"/>
<rect x="1164" y="791" width="5" height="1" fill="#cb2b2b"/>
<rect x="1165" y="792" width="3" height="13" fill="#b71c1c"/>
<rect x="1170" y="787" width="4" height="18" fill="#1e6524"/>
<rect x="1170" y="787" width="4" height="1" fill="#217029"/>
<rect x="1171" y="788" width="2" height="17" fill="#1b5e20"/>
<rect x="1175" y="784" width="5" height="21" fill="#c12424"/>
<rect x="1175" y="784" width="5" height="1" fill="#cb2b2b"/>
<rect x="1176" y="785" width="3" height="20" fill="#b71c1c"/>
<rect x="1181" y="790" width="4" height="15" fill="#1e6524"/>
<rect x="1181" y="790" width="4" height="1" fill="#217029"/>
<rect x="1182" y="791" width="2" height="14" fill="#1b5e20"/>
<rect x="1186" y="785" width="5" height="20" fill="#1e6524"/>
<rect x="1186" y="785" width="5" height="1" fill="#217029"/>
<rect x="1187" y="786" width="3" height="19" fill="#1b5e20"/>
<rect x="1192" y="788" width="4" height="17" fill="#c12424"/>
<rect x="1192" y="788" width="4" height="1" fill="#cb2b2b"/>
<rect x="1193" y="789" width="2" height="16" fill="#b71c1c"/>
<rect x="1197" y="781" width="5" height="24" fill="#1e6524"/>
<rect x="1197" y="781" width="5" height="1" fill="#217029"/>
<rect x="1198" y="782" width="3" height="23" fill="#1b5e20"/>
<rect x="1203" y="779" width="4" height="26" fill="#1e6524"/>
<rect x="1203" y="779" width="4" height="1" fill="#217029"/>
<rect x="1204" y="780" width="2" height="25" fill="#1b5e20"/>
<rect x="1208" y="785" width="4" height="20" fill="#c12424"/>
<rect x="1208" y="785" width="4" height="1" fill="#cb2b2b"/>
<rect x="1209" y="786" width="2" height="19" fill="#b71c1c"/>
<rect x="1213" y="789" width="5" height="16" fill="#1e6524"/>
<rect x="1213" y="789" width="5" height="1" fill="#217029"/>
<rect x="1214" y="790" width="3" height="15" fill="#1b5e20"/>
<rect x="1219" y="773" width="4" height="32" fill="#c12424"/>
<rect x="1219" y="773" width="4" height="1" fill="#cb2b2b"/>
<rect x="1220" y="774" width="2" height="31" fill="#b71c1c"/>
<rect x="1224" y="774" width="5" height="31" fill="#c12424"/>
<rect x="1224" y="774" width="5" height="1" fill="#cb2b2b"/>
<rect x="1225" y="775" width="3" height="30" fill="#b71c1c"/>
<rect x="1230" y="778" width="4" height="27" fill="#c12424"/>
<rect x="1230" y="778" width="4" height="1" fill="#cb2b2b"/>
<rect x="1231" y="779" width="2" height="26" fill="#b71c1c"/>
<rect x="1235" y="781" width="5" height="24" fill="#c12424"/>
<rect x="1235" y="781" width="5" height="1" fill="#cb2b2b"/>
<rect x="1236" y="782" width="3" height="23" fill="#b71c1c"/>
<rect x="1241" y="783" width="4" height="22" fill="#c12424"/>
<rect x="1241" y="783" width="4" height="1" fill="#cb2b2b"/>
<rect x="1242" y="784" width="2" height="21" fill="#b71c1c"/>
<rect x="1246" y="776" width="5" height="29" fill="#c12424"/>
<rect x="1246" y="776" width="5" height="1" fill="#cb2b2b"/>
<rect x="1247" y="777" width="3" height="28" fill="#b71c1c"/>
<rect x="1252" y="780" width="4" height="25" fill="#1e6524"/>
<rect x="1252" y="780" width="4" height="1" fill="#217029"/>
<rect x="1253" y="781" width="2" height="24" fill="#1b5e20"/>
<rect x="1257" y="780" width="5" height="25" fill="#c12424"/>
<rect x="1257" y="780" width="5" height="1" fill="#cb2b2b"/>
<rect x="1258" y="781" width="3" height="24" fill="#b71c1c"/>
<rect x="1263" y="777" width="4" height="28" fill="#1e6524"/>
<rect x="1263" y="777" width="4" height="1" fill="#217029"/>
<rect x="1264" y="778" width="2" height="27" fill="#1b5e20"/>
<rect x="1268" y="784" width="5" height="21" fill="#c12424"/>
<rect x="1268" y="784" width="5" height="1" fill="#cb2b2b"/>
<rect x="1269" y="785" width="3" height="20" fill="#b71c1c"/>
<rect x="1274" y="772" width="4" height="33" fill="#c12424"/>
<rect x="1274" y="772" width="4" height="1" fill="#cb2b2b"/>
<rect x="1275" y="773" width="2" height="32" fill="#b71c1c"/>
<rect x="1279" y="779" width="5" height="26" fill="#1e6524"/>
<rect x="1279" y="779" width="5" height="1" fill="#217029"/>
<rect x="1280" y="780" width="3" height="25" fill="#1b5e20"/>
<rect x="1285" y="781" width="4" height="24" fill="#c12424"/>
<rect x="1285" y="781" width="4" height="1" fill="#cb2b2b"/>
<rect x="1286" y="782" width="2" height="23" fill="#b71c1c"/>
<rect x="1290" y="764" width="5" height="41" fill="#c12424"/>
<rect x="1290" y="764" width="5" height="1" fill="#cb2b2b"/>
<rect x="1291" y="765" width="3" height="40" fill="#b71c1c"/>
<rect x="1296" y="765" width="4" height="40" fill="#c12424"/>
<rect x="1296" y="765" width="4" height="1" fill="#cb2b2b"/>
<rect x="1297" y="766" width="2" height="39" fill="#b71c1c"/>
<rect x="1301" y="791" width="5" height="14" fill="#1e6524"/>
<rect x="1301" y="791" width="5" height="1" fill="#217029"/>
<rect x="1302" y="792" width="3" height="13" fill="#1b5e20"/>
<rect x="1307" y="779" width="4" height="26" fill="#c12424"/>
<rect x="1307" y="779" width="4" height="1" fill="#cb2b2b"/>
<rect x="1308" y="780" width="2" height="25" fill="#b71c1c"/>
<rect x="1312" y="784" width="5" height="21" fill="#c12424"/>
<rect x="1312" y="784" width="5" height="1" fill="#cb2b2b"/>
<rect x="1313" y="785" width="3" height="20" fill="#b71c1c"/>
<rect x="1318" y="761" width="4" height="44" fill="#c12424"/>
<rect x="1318" y="761" width="4" height="1" fill="#cb2b2b"/>
<rect x="1319" y="762" width="2" height="43" fill="#b71c1c"/>
<rect x="1323" y="778" width="5" height="27" fill="#1e6524"/>
<rect x="1323" y="778" width="5" height="1" fill="#217029"/>
<rect x="1324" y="779" width="3" height="26" fill="#1b5e20"/>
<rect x="1329" y="788" width="4" height="17" fill="#c12424"/>
<rect x="1329" y="788" width="4" height="1" fill="#cb2b2b"/>
<rect x="1330" y="789" width="2" height="16" fill="#b71c1c"/>
<rect x="1334" y="789" width="5" height="16" fill="#1e6524"/>
<rect x="1334" y="789" width="5" height="1" fill="#217029"/>
<rect x="1335" y="790" width="3" height="15" fill="#1b5e20"/>
<rect x="1340" y="791" width="4" height="14" fill="#1e6524"/>
<rect x="1340" y="791" width="4" height="1" fill="#217029"/>
<rect x="1341" y="792" width="2" height="13" fill="#1b5e20"/>
<rect x="1345" y="793" width="5" height="12" fill="#1e6524"/>
<rect x="1345" y="793" width="5" height="1" fill="#217029"/>
<rect x="1346" y="794" width="3" height="11" fill="#1b5e20"/>
<rect x="1351" y="787" width="4" height="18" fill="#1e6524"/>
<rect x="1351" y="787" width="4" height="1" fill="#217029"/>
<rect x="1352" y="788" width="2" height="17" fill="#1b5e20"/>
<rect x="1356" y="789" width="5" height="16" fill="#c12424"/>
<rect x="1356" y="789" width="5" height="1" fill="#cb2b2b"/>
<rect x="1357" y="790" width="3" height="15" fill="#b71c1c"/>
<rect x="1362" y="790" width="4" height="15" fill="#c12424"/>
<rect x="1362" y="790" width="4" height="1" fill="#cb2b2b"/>
<rect x="1363" y="791" width="2" height="14" fill="#b71c1c"/>
<rect x="1367" y="790" width="5" height="15" fill="#1e6524"/>
<rect x="1367" y="790" width="5" height="1" fill="#217029"/>
<rect x="1368" y="791" width="3" height="14" fill="#1b5e20"/>
<rect x="1373" y="791" width="4" height="14" fill="#c12424"/>
<rect x="1373" y="791" width="4" height="1" fill="#cb2b2b"/>
<rect x="1374" y="792" width="2" height="13" fill="#b71c1c"/>
<rect x="1378" y="795" width="5" height="10" fill="#c12424"/>
<rect x="1378" y="795" width="5" height="1" fill="#cb2b2b"/>
<rect x="1379" y="796" width="3" height="9" fill="#b71c1c"/>
<rect x="1384" y="791" width="4" height="14" fill="#1e6524"/>
<rect x="1384" y="791" width="4" height="1" fill="#217029"/>
<rect x="1385" y="792" width="2" height="13" fill="#1b5e20"/>
</g>
<polyline points="11.0,778.5 15.0,779.8 21.2,781.0 31.2,781.5 32.5,782.2 53.8,782.2 55.0,783.1 65.0,783.1 66.2,784.0 70.0,783.8 71.2,783.1 75.0,783.5 76.2,784.4 86.2,784.8 87.5,785.6 135.0,785.9 136.2,785.0 146.2,785.0 147.5,785.9 152.5,785.9 153.8,785.0 180.0,785.0 181.2,785.9 190.0,785.9 191.2,786.9 196.2,786.9 197.5,785.6 200.0,786.0 212.5,785.0 213.8,784.0 223.8,783.5 225.0,782.8 235.0,782.5 236.2,781.9 251.2,781.9 252.5,780.0 256.2,779.4 257.5,776.9 267.5,776.5 268.8,775.6 273.8,775.6 275.0,776.9 285.0,776.9 286.2,775.6 296.2,775.2 300.0,774.4 301.2,771.9 350.0,771.9 352.5,770.9 355.0,771.2 356.2,771.9 361.2,772.2 362.5,772.9 372.5,772.9 373.8,771.9 377.5,772.2 378.8,772.9 389.4,773.1 390.0,773.1 400.0,772.5 401.2,771.5 410.0,771.9 411.2,773.8 437.5,773.8 440.0,775.0 450.0,775.2 455.0,776.9 461.2,777.5 462.5,778.1 477.5,778.1 478.8,780.0 482.5,780.6 492.5,781.0 493.8,781.9 508.8,782.1 515.0,784.0 527.5,786.2 537.5,788.1 568.8,788.1 570.0,789.1 579.4,789.1 580.0,789.0 586.2,789.1 587.5,790.0 602.5,790.0 603.8,791.0 613.8,791.0 615.0,790.0 623.8,790.0 626.2,789.1 711.2,789.1 713.8,788.1 717.5,788.1 720.0,789.1 735.0,789.1 736.2,791.0 745.0,791.0 746.2,790.0 761.2,790.0 763.8,787.1 767.5,786.9 769.4,785.6 770.0,784.9 777.7,782.9 785.4,781.0 793.2,780.0 799.6,779.0 801.5,776.0 807.3,775.0 812.4,773.9 818.9,773.0 824.0,773.9 829.2,773.0 839.5,772.4 840.7,770.5 845.9,768.9 851.0,768.9 853.6,767.9 861.3,767.4 863.9,766.6 867.8,767.6 872.9,768.2 874.2,770.5 878.1,772.8 883.2,772.8 885.8,772.0 894.8,772.0 896.1,773.8 905.1,773.8 911.5,775.9 917.9,776.9 921.8,776.9 923.1,775.0 928.2,773.9 929.5,771.8 933.4,769.8 934.7,767.9 939.8,766.4 946.2,764.7 950.1,765.6 955.2,766.6 959.1,766.9 960.0,766.6 966.4,764.9 976.7,764.9 981.9,763.0 992.2,762.5 994.1,759.9 997.9,759.5 999.9,758.0 1014.0,758.0 1016.0,755.9 1021.7,755.0 1026.9,754.0 1030.7,754.0 1032.7,755.7 1037.2,756.3 1038.5,758.0 1042.3,758.2 1043.6,759.5 1047.5,759.9 1048.8,761.1 1074.5,761.1 1077.1,762.1 1086.1,762.1 1088.0,761.1 1091.8,761.1 1093.8,762.1 1097.0,762.1 1098.3,761.1 1102.8,761.1 1103.4,764.9 1107.9,764.9 1109.2,766.0 1113.1,766.0 1114.4,765.1 1124.7,765.1 1125.9,766.0 1131.1,766.0 1132.4,767.9 1136.2,767.9 1137.5,766.6 1146.5,766.9 1147.8,768.9 1149.1,768.9 1150.0,768.9 1162.9,771.0 1175.7,773.6 1191.2,776.6 1201.5,776.9 1211.7,778.2 1222.0,778.8 1224.6,780.0 1245.2,780.2 1252.9,782.0 1261.9,782.3 1264.5,781.4 1273.5,781.0 1274.8,780.2 1288.9,780.2 1291.5,778.8 1296.6,777.9 1299.9,778.4 1300.0,777.5 1306.2,778.8 1316.2,779.0 1318.8,776.9 1328.8,776.9 1330.0,777.5 1338.8,777.8 1345.0,780.0 1355.0,780.2 1356.2,781.0 1366.2,781.2 1367.5,782.1 1376.2,782.2 1378.8,783.1 1383.8,783.5 1385.6,784.4" fill="none" stroke="#f23645" stroke-width="1.8" stroke-linejoin="round" stroke-linecap="round" />
<path d="M11.0,332.8 C14.0,332.8 24.8,333.3 28.8,333.1 C32.8,332.9 33.1,331.9 35.0,331.5 C36.9,331.1 37.9,330.9 40.0,330.9 C42.1,330.9 44.6,331.4 47.5,331.6 C50.4,331.8 53.3,332.0 57.5,332.1 C61.7,332.2 69.0,332.8 72.5,332.2 C76.0,331.8 76.7,329.1 78.8,329.1 C80.8,329.2 82.9,331.3 85.0,332.5 C87.1,333.7 89.2,335.0 91.2,336.2 C93.3,337.5 95.4,338.8 97.5,339.8 C99.6,340.7 101.7,341.4 103.8,341.9 C105.8,342.3 107.9,342.2 110.0,342.5 C112.1,342.8 114.2,343.2 116.2,343.5 C118.3,343.8 120.4,344.1 122.5,344.4 C124.6,344.7 126.7,345.1 128.8,345.4 C130.8,345.6 132.9,345.8 135.0,345.8 C137.1,345.8 139.6,345.5 141.2,345.4 C142.9,345.2 144.0,344.8 145.0,344.8 C146.0,344.7 146.0,344.9 147.5,345.0 C149.0,345.1 150.6,345.3 153.8,345.4 C156.9,345.4 163.1,345.6 166.2,345.4 C169.4,345.1 170.4,344.7 172.5,344.0 C174.6,343.3 176.7,341.9 178.8,341.2 C180.8,340.6 182.9,340.5 185.0,340.4 C187.1,340.3 188.9,340.6 191.2,340.6 C193.6,340.7 197.9,340.7 199.4,340.6 C200.8,340.5 198.9,340.4 200.0,340.0 C201.1,339.6 204.2,338.8 206.2,338.5 C208.3,338.2 209.4,338.2 212.5,338.1 C215.6,338.1 221.7,338.2 225.0,338.1 C228.3,338.1 230.4,337.9 232.5,337.8 C234.6,337.6 234.6,337.3 237.5,337.2 C240.4,337.2 247.3,336.9 250.0,337.2 C252.7,337.6 252.1,338.7 253.8,339.4 C255.4,340.0 257.5,340.8 260.0,341.2 C262.5,341.7 265.2,342.0 268.8,342.2 C272.3,342.5 278.1,342.7 281.2,342.8 C284.4,342.8 284.8,342.8 287.5,342.5 C290.2,342.2 294.8,340.3 297.5,341.0 C300.2,341.7 301.9,345.6 303.8,346.6 C305.6,347.6 306.2,347.3 308.8,346.9 C311.2,346.5 315.0,344.4 318.8,344.1 C322.5,343.8 328.1,345.0 331.2,345.0 C334.4,345.0 335.6,344.7 337.5,344.4 C339.4,344.1 340.4,343.4 342.5,343.1 C344.6,342.8 347.3,342.7 350.0,342.5 C352.7,342.3 356.7,341.7 358.8,341.9 C360.8,342.1 360.8,342.7 362.5,343.8 C364.2,344.8 366.7,346.0 368.8,348.1 C370.8,350.2 372.9,354.4 375.0,356.2 C377.1,358.1 378.9,358.1 381.2,359.4 C383.6,360.7 387.9,363.0 389.4,364.0 C390.8,365.0 388.9,364.5 390.0,365.6 C391.1,366.7 394.2,368.4 396.2,370.6 C398.3,372.8 400.4,375.9 402.5,378.8 C404.6,381.6 406.7,384.8 408.8,387.5 C410.8,390.2 412.9,392.8 415.0,395.0 C417.1,397.2 419.2,399.1 421.2,400.6 C423.3,402.2 425.6,403.6 427.5,404.4 C429.4,405.1 431.0,405.1 432.5,405.2 C434.0,405.4 434.6,405.8 436.2,405.0 C437.9,404.2 440.6,402.0 442.5,400.6 C444.4,399.3 445.8,397.9 447.5,396.9 C449.2,395.9 450.6,395.5 452.5,394.8 C454.4,394.0 456.7,393.4 458.8,392.5 C460.8,391.6 463.3,390.2 465.0,389.4 C466.7,388.5 466.2,387.8 468.8,387.5 C471.2,387.2 477.3,387.1 480.0,387.5 C482.7,387.9 483.1,389.3 485.0,390.0 C486.9,390.7 488.8,391.2 491.2,391.5 C493.8,391.8 497.3,391.9 500.0,391.9 C502.7,391.9 505.0,392.0 507.5,391.6 C510.0,391.2 512.7,390.6 515.0,389.4 C517.3,388.2 519.2,386.1 521.2,384.4 C523.3,382.6 525.2,380.6 527.5,378.8 C529.8,376.9 532.9,374.4 535.0,373.1 C537.1,371.8 538.1,371.6 540.0,370.9 C541.9,370.1 544.2,369.6 546.2,368.8 C548.3,367.9 550.4,367.0 552.5,365.6 C554.6,364.3 556.7,362.3 558.8,360.6 C560.8,359.0 562.9,357.0 565.0,355.6 C567.1,354.3 568.9,353.0 571.2,352.5 C573.6,352.0 577.9,352.5 579.4,352.5 C580.8,352.5 578.2,352.1 580.0,352.5 C581.8,352.9 586.9,353.8 590.0,354.6 C593.1,355.4 596.2,356.5 598.8,357.2 C601.2,358.0 602.9,358.3 605.0,359.4 C607.1,360.4 609.2,362.1 611.2,363.5 C613.3,364.9 615.4,366.4 617.5,367.5 C619.6,368.6 621.2,369.6 623.8,370.2 C626.2,370.9 629.8,370.9 632.5,371.5 C635.2,372.1 637.9,373.2 640.0,373.8 C642.1,374.3 643.5,374.7 645.0,374.6 C646.5,374.5 646.0,373.5 648.8,373.1 C651.5,372.8 658.1,372.4 661.2,372.5 C664.4,372.6 664.8,373.2 667.5,373.5 C670.2,373.8 674.4,373.8 677.5,374.0 C680.6,374.2 682.7,374.8 686.2,375.0 C689.8,375.2 694.6,375.0 698.8,375.4 C702.9,375.7 707.5,376.6 711.2,377.1 C715.0,377.6 718.1,378.1 721.2,378.2 C724.4,378.4 727.3,378.3 730.0,378.2 C732.7,378.2 735.0,377.7 737.5,377.8 C740.0,377.8 742.1,378.4 745.0,378.5 C747.9,378.6 752.5,378.8 755.0,378.5 C757.5,378.2 758.5,376.8 760.0,376.9 C761.5,376.9 762.2,377.5 763.8,378.8 C765.3,380.0 768.3,383.4 769.4,384.4 C770.4,385.3 768.7,383.5 770.0,384.3 C771.3,385.2 774.4,388.0 777.2,389.6 C780.0,391.2 783.6,392.9 786.8,393.9 C790.0,395.0 792.8,394.7 796.4,395.9 C800.0,397.0 804.8,400.1 808.4,400.7 C812.0,401.2 814.8,400.3 818.0,399.2 C821.2,398.1 824.4,396.0 827.6,393.9 C830.8,391.9 834.0,389.3 837.2,386.7 C840.4,384.1 844.4,380.9 846.8,378.3 C849.1,375.8 849.5,373.9 851.2,371.2 C853.0,368.6 855.4,365.8 857.5,362.5 C859.6,359.2 861.7,354.5 863.8,351.2 C865.8,348.0 867.9,345.5 870.0,343.1 C872.1,340.7 874.2,338.5 876.2,336.9 C878.3,335.3 880.8,334.3 882.5,333.5 C884.2,332.7 884.8,333.0 886.2,331.9 C887.7,330.8 889.4,327.9 891.2,326.9 C893.1,325.9 896.0,326.4 897.5,326.0 C899.0,325.6 898.3,325.0 900.0,324.4 C901.7,323.8 904.4,322.7 907.5,322.5 C910.6,322.3 915.8,322.2 918.8,323.1 C921.7,324.1 923.2,325.1 925.0,328.1 C926.8,331.1 927.5,338.2 929.4,341.2 C931.2,344.3 934.4,344.1 936.2,346.2 C938.1,348.4 939.0,353.0 940.6,354.4 C942.3,355.8 944.3,354.2 946.2,354.6 C948.2,355.0 950.5,356.4 952.5,356.9 C954.5,357.4 956.2,357.7 958.1,357.5 C960.0,357.3 961.8,356.8 963.8,355.6 C965.7,354.5 967.9,352.5 970.0,350.6 C972.1,348.8 974.0,346.6 976.2,344.4 C978.5,342.2 981.4,339.6 983.8,337.5 C986.1,335.4 988.5,334.4 990.6,331.9 C992.7,329.4 994.4,325.6 996.2,322.5 C998.1,319.4 1000.1,317.1 1001.9,313.1 C1003.6,309.2 1005.1,302.8 1006.9,298.8 C1008.6,294.7 1010.7,291.7 1012.5,288.8 C1014.3,285.8 1015.6,283.3 1017.5,281.2 C1019.4,279.2 1021.9,278.5 1023.8,276.2 C1025.6,274.0 1026.9,269.6 1028.8,267.5 C1030.6,265.4 1033.1,264.3 1035.0,263.5 C1036.9,262.7 1038.1,263.2 1040.0,262.8 C1041.9,262.3 1043.5,260.8 1046.2,260.6 C1049.0,260.5 1054.0,261.9 1056.2,261.9 C1058.5,261.9 1058.1,260.9 1060.0,260.5 C1061.9,260.1 1065.7,259.5 1067.9,259.6 C1070.0,259.7 1071.3,261.0 1073.1,261.1 C1074.8,261.2 1076.7,260.8 1078.3,260.2 C1079.9,259.7 1081.1,259.4 1082.7,258.1 C1084.3,256.8 1086.2,254.4 1087.9,252.4 C1089.7,250.4 1091.6,247.9 1093.2,246.3 C1094.8,244.7 1096.3,243.7 1097.5,242.8 C1098.8,241.8 1099.7,242.0 1100.6,240.6 C1101.4,239.2 1102.0,236.8 1102.8,234.5 C1103.6,232.2 1104.4,229.1 1105.4,226.6 C1106.4,224.2 1107.8,221.6 1108.9,219.7 C1109.9,217.8 1110.2,217.1 1111.5,215.3 C1112.8,213.5 1115.3,210.6 1116.7,208.8 C1118.2,206.9 1119.2,205.5 1120.2,204.4 C1121.2,203.3 1121.6,202.3 1122.7,202.2 C1123.7,202.1 1124.8,203.1 1126.3,203.8 C1127.8,204.5 1129.7,205.5 1131.6,206.6 C1133.4,207.6 1135.6,208.8 1137.7,210.1 C1139.7,211.4 1141.7,213.9 1143.8,214.4 C1145.8,215.0 1147.8,213.4 1149.9,213.4 C1151.9,213.4 1154.3,214.0 1156.0,214.4 C1157.7,214.9 1158.5,215.7 1160.0,216.2 C1161.5,216.7 1162.5,217.0 1165.0,217.5 C1167.5,218.0 1171.9,218.7 1175.0,219.0 C1178.1,219.3 1181.4,219.4 1183.8,219.4 C1186.1,219.3 1188.1,218.9 1189.4,218.8 C1190.6,218.6 1190.3,219.1 1191.2,218.8 C1192.2,218.4 1193.3,217.5 1195.0,216.9 C1196.7,216.3 1198.8,215.7 1201.2,215.2 C1203.8,214.8 1207.5,215.4 1210.0,214.4 C1212.5,213.4 1214.2,210.5 1216.2,209.4 C1218.3,208.2 1220.7,207.9 1222.5,207.5 C1224.3,207.1 1225.2,206.6 1226.9,206.9 C1228.5,207.1 1230.5,208.3 1232.5,209.0 C1234.5,209.7 1236.7,210.0 1238.8,211.2 C1240.8,212.5 1242.9,214.2 1245.0,216.2 C1247.1,218.3 1249.2,221.2 1251.2,223.8 C1253.3,226.2 1255.4,228.8 1257.5,231.2 C1259.6,233.8 1261.7,236.2 1263.8,238.8 C1265.8,241.2 1268.1,243.1 1270.0,246.2 C1271.9,249.4 1273.3,253.9 1275.0,257.5 C1276.7,261.1 1277.9,264.9 1280.0,268.1 C1282.1,271.4 1285.2,274.2 1287.5,276.9 C1289.8,279.6 1291.7,282.0 1293.8,284.4 C1295.8,286.8 1297.9,289.1 1300.0,291.2 C1302.1,293.4 1304.2,295.6 1306.2,297.5 C1308.3,299.4 1310.8,301.0 1312.5,302.5 C1314.2,304.0 1315.0,304.8 1316.2,306.2 C1317.5,307.7 1318.5,310.1 1320.0,311.2 C1321.5,312.4 1322.5,312.9 1325.0,313.4 C1327.5,313.8 1331.5,313.9 1335.0,314.0 C1338.5,314.1 1343.3,314.3 1346.2,314.0 C1349.2,313.7 1349.8,312.7 1352.5,312.2 C1355.2,311.8 1359.2,311.7 1362.5,311.2 C1365.8,310.8 1369.4,309.8 1372.5,309.4 C1375.6,309.0 1378.9,308.9 1381.2,309.0 C1383.6,309.1 1385.9,309.8 1386.9,310.0" fill="none" stroke="#2962ff" stroke-width="3.2" stroke-linejoin="round" stroke-linecap="round" />
<g shape-rendering="crispEdges">
<rect x="13" y="316" width="1" height="8" fill="#089981"/>
<rect x="12" y="322" width="3" height="1" fill="#089981"/>
<rect x="18" y="311" width="1" height="10" fill="#089981"/>
<rect x="17" y="315" width="3" height="4" fill="#089981"/>
<rect x="24" y="314" width="1" height="5" fill="#f23645"/>
<rect x="23" y="317" width="3" height="2" fill="#f23645"/>
<rect x="29" y="308" width="1" height="9" fill="#089981"/>
<rect x="28" y="311" width="3" height="6" fill="#089981"/>
<rect x="35" y="300" width="1" height="11" fill="#089981"/>
<rect x="34" y="307" width="3" height="4" fill="#089981"/>
<rect x="40" y="309" width="1" height="10" fill="#f23645"/>
<rect x="39" y="310" width="3" height="9" fill="#f23645"/>
<rect x="46" y="318" width="1" height="8" fill="#f23645"/>
<rect x="45" y="320" width="3" height="4" fill="#f23645"/>
<rect x="51" y="314" width="1" height="11" fill="#f23645"/>
<rect x="50" y="320" width="3" height="5" fill="#f23645"/>
<rect x="57" y="305" width="1" height="19" fill="#089981"/>
<rect x="56" y="314" width="3" height="8" fill="#089981"/>
<rect x="62" y="309" width="1" height="10" fill="#089981"/>
<rect x="61" y="310" width="3" height="7" fill="#089981"/>
<rect x="68" y="296" width="1" height="12" fill="#f23645"/>
<rect x="67" y="303" width="3" height="4" fill="#f23645"/>
<rect x="73" y="308" width="1" height="11" fill="#f23645"/>
<rect x="72" y="310" width="3" height="7" fill="#f23645"/>
<rect x="79" y="322" width="1" height="7" fill="#f23645"/>
<rect x="78" y="322" width="3" height="5" fill="#f23645"/>
<rect x="84" y="329" width="1" height="6" fill="#f23645"/>
<rect x="83" y="330" width="3" height="5" fill="#f23645"/>
<rect x="90" y="336" width="1" height="6" fill="#f23645"/>
<rect x="89" y="336" width="3" height="4" fill="#f23645"/>
<rect x="95" y="333" width="1" height="9" fill="#f23645"/>
<rect x="94" y="335" width="3" height="4" fill="#f23645"/>
<rect x="101" y="335" width="1" height="7" fill="#f23645"/>
<rect x="100" y="338" width="3" height="1" fill="#f23645"/>
<rect x="106" y="332" width="1" height="7" fill="#089981"/>
<rect x="105" y="334" width="3" height="4" fill="#089981"/>
<rect x="112" y="321" width="1" height="12" fill="#089981"/>
<rect x="111" y="324" width="3" height="9" fill="#089981"/>
<rect x="117" y="323" width="1" height="11" fill="#f23645"/>
<rect x="116" y="325" width="3" height="9" fill="#f23645"/>
<rect x="123" y="324" width="1" height="12" fill="#089981"/>
<rect x="122" y="328" width="3" height="7" fill="#089981"/>
<rect x="128" y="331" width="1" height="7" fill="#f23645"/>
<rect x="127" y="331" width="3" height="5" fill="#f23645"/>
<rect x="134" y="325" width="1" height="10" fill="#089981"/>
<rect x="133" y="328" width="3" height="6" fill="#089981"/>
<rect x="139" y="321" width="1" height="9" fill="#f23645"/>
<rect x="138" y="326" width="3" height="3" fill="#f23645"/>
<rect x="145" y="326" width="1" height="8" fill="#089981"/>
<rect x="144" y="326" width="3" height="4" fill="#089981"/>
<rect x="150" y="325" width="1" height="7" fill="#f23645"/>
<rect x="149" y="326" width="3" height="6" fill="#f23645"/>
<rect x="156" y="318" width="1" height="12" fill="#089981"/>
<rect x="155" y="320" width="3" height="10" fill="#089981"/>
<rect x="161" y="317" width="1" height="10" fill="#f23645"/>
<rect x="160" y="320" width="3" height="7" fill="#f23645"/>
<rect x="167" y="323" width="1" height="14" fill="#089981"/>
<rect x="166" y="328" width="3" height="7" fill="#089981"/>
<rect x="172" y="317" width="1" height="8" fill="#089981"/>
<rect x="171" y="322" width="3" height="3" fill="#089981"/>
<rect x="178" y="328" width="1" height="5" fill="#f23645"/>
<rect x="177" y="329" width="3" height="4" fill="#f23645"/>
<rect x="183" y="327" width="1" height="7" fill="#f23645"/>
<rect x="182" y="330" width="3" height="3" fill="#f23645"/>
<rect x="189" y="326" width="1" height="7" fill="#f23645"/>
<rect x="188" y="328" width="3" height="3" fill="#f23645"/>
<rect x="194" y="325" width="1" height="5" fill="#089981"/>
<rect x="193" y="326" width="3" height="1" fill="#089981"/>
<rect x="200" y="332" width="1" height="10" fill="#f23645"/>
<rect x="199" y="332" width="3" height="10" fill="#f23645"/>
<rect x="205" y="331" width="1" height="8" fill="#089981"/>
<rect x="204" y="332" width="3" height="6" fill="#089981"/>
<rect x="211" y="328" width="1" height="7" fill="#089981"/>
<rect x="210" y="329" width="3" height="6" fill="#089981"/>
<rect x="216" y="314" width="1" height="12" fill="#089981"/>
<rect x="215" y="320" width="3" height="6" fill="#089981"/>
<rect x="222" y="317" width="1" height="8" fill="#f23645"/>
<rect x="221" y="317" width="3" height="8" fill="#f23645"/>
<rect x="227" y="316" width="1" height="8" fill="#f23645"/>
<rect x="226" y="322" width="3" height="1" fill="#f23645"/>
<rect x="233" y="316" width="1" height="11" fill="#f23645"/>
<rect x="232" y="319" width="3" height="6" fill="#f23645"/>
<rect x="238" y="307" width="1" height="14" fill="#f23645"/>
<rect x="237" y="318" width="3" height="3" fill="#f23645"/>
<rect x="244" y="319" width="1" height="6" fill="#f23645"/>
<rect x="243" y="320" width="3" height="5" fill="#f23645"/>
<rect x="249" y="317" width="1" height="13" fill="#f23645"/>
<rect x="248" y="319" width="3" height="11" fill="#f23645"/>
<rect x="254" y="303" width="1" height="21" fill="#089981"/>
<rect x="253" y="306" width="3" height="18" fill="#089981"/>
<rect x="260" y="284" width="1" height="26" fill="#089981"/>
<rect x="259" y="302" width="3" height="7" fill="#089981"/>
<rect x="265" y="308" width="1" height="12" fill="#089981"/>
<rect x="264" y="310" width="3" height="5" fill="#089981"/>
<rect x="271" y="314" width="1" height="18" fill="#f23645"/>
<rect x="270" y="317" width="3" height="15" fill="#f23645"/>
<rect x="276" y="327" width="1" height="10" fill="#089981"/>
<rect x="275" y="331" width="3" height="3" fill="#089981"/>
<rect x="282" y="321" width="1" height="8" fill="#089981"/>
<rect x="281" y="325" width="3" height="2" fill="#089981"/>
<rect x="287" y="323" width="1" height="9" fill="#f23645"/>
<rect x="286" y="326" width="3" height="5" fill="#f23645"/>
<rect x="293" y="317" width="1" height="13" fill="#089981"/>
<rect x="292" y="318" width="3" height="12" fill="#089981"/>
<rect x="298" y="308" width="1" height="15" fill="#089981"/>
<rect x="297" y="319" width="3" height="4" fill="#089981"/>
<rect x="304" y="274" width="1" height="32" fill="#089981"/>
<rect x="303" y="280" width="3" height="25" fill="#089981"/>
<rect x="309" y="266" width="1" height="23" fill="#089981"/>
<rect x="308" y="286" width="3" height="3" fill="#089981"/>
<rect x="315" y="291" width="1" height="18" fill="#f23645"/>
<rect x="314" y="291" width="3" height="15" fill="#f23645"/>
<rect x="320" y="288" width="1" height="12" fill="#089981"/>
<rect x="319" y="296" width="3" height="3" fill="#089981"/>
<rect x="326" y="288" width="1" height="10" fill="#089981"/>
<rect x="325" y="290" width="3" height="7" fill="#089981"/>
<rect x="331" y="274" width="1" height="14" fill="#f23645"/>
<rect x="330" y="277" width="3" height="5" fill="#f23645"/>
<rect x="337" y="278" width="1" height="8" fill="#f23645"/>
<rect x="336" y="281" width="3" height="2" fill="#f23645"/>
<rect x="342" y="292" width="1" height="15" fill="#f23645"/>
<rect x="341" y="292" width="3" height="15" fill="#f23645"/>
<rect x="348" y="311" width="1" height="13" fill="#089981"/>
<rect x="347" y="317" width="3" height="2" fill="#089981"/>
<rect x="353" y="318" width="1" height="7" fill="#f23645"/>
<rect x="352" y="322" width="3" height="2" fill="#f23645"/>
<rect x="359" y="318" width="1" height="9" fill="#089981"/>
<rect x="358" y="322" width="3" height="5" fill="#089981"/>
<rect x="364" y="321" width="1" height="12" fill="#f23645"/>
<rect x="363" y="324" width="3" height="8" fill="#f23645"/>
<rect x="370" y="341" width="1" height="8" fill="#089981"/>
<rect x="369" y="344" width="3" height="5" fill="#089981"/>
<rect x="375" y="346" width="1" height="10" fill="#f23645"/>
<rect x="374" y="348" width="3" height="8" fill="#f23645"/>
<rect x="381" y="350" width="1" height="15" fill="#089981"/>
<rect x="380" y="352" width="3" height="9" fill="#089981"/>
<rect x="386" y="343" width="1" height="9" fill="#089981"/>
<rect x="385" y="349" width="3" height="1" fill="#089981"/>
<rect x="392" y="351" width="1" height="4" fill="#f23645"/>
<rect x="391" y="352" width="3" height="1" fill="#f23645"/>
<rect x="397" y="354" width="1" height="8" fill="#089981"/>
<rect x="396" y="356" width="3" height="6" fill="#089981"/>
<rect x="403" y="365" width="1" height="19" fill="#f23645"/>
<rect x="402" y="368" width="3" height="3" fill="#f23645"/>
<rect x="408" y="366" width="1" height="19" fill="#089981"/>
<rect x="407" y="376" width="3" height="9" fill="#089981"/>
<rect x="414" y="373" width="1" height="19" fill="#f23645"/>
<rect x="413" y="374" width="3" height="14" fill="#f23645"/>
<rect x="419" y="376" width="1" height="16" fill="#089981"/>
<rect x="418" y="378" width="3" height="12" fill="#089981"/>
<rect x="425" y="369" width="1" height="13" fill="#f23645"/>
<rect x="424" y="374" width="3" height="7" fill="#f23645"/>
<rect x="430" y="367" width="1" height="12" fill="#089981"/>
<rect x="429" y="367" width="3" height="11" fill="#089981"/>
<rect x="436" y="358" width="1" height="7" fill="#089981"/>
<rect x="435" y="363" width="3" height="1" fill="#089981"/>
<rect x="441" y="361" width="1" height="5" fill="#089981"/>
<rect x="440" y="362" width="3" height="4" fill="#089981"/>
<rect x="447" y="365" width="1" height="7" fill="#089981"/>
<rect x="446" y="367" width="3" height="5" fill="#089981"/>
<rect x="452" y="364" width="1" height="5" fill="#089981"/>
<rect x="451" y="367" width="3" height="1" fill="#089981"/>
<rect x="458" y="363" width="1" height="6" fill="#089981"/>
<rect x="457" y="363" width="3" height="4" fill="#089981"/>
<rect x="463" y="354" width="1" height="9" fill="#089981"/>
<rect x="462" y="355" width="3" height="8" fill="#089981"/>
<rect x="469" y="343" width="1" height="9" fill="#089981"/>
<rect x="468" y="346" width="3" height="6" fill="#089981"/>
<rect x="474" y="330" width="1" height="17" fill="#089981"/>
<rect x="473" y="333" width="3" height="14" fill="#089981"/>
<rect x="480" y="337" width="1" height="7" fill="#f23645"/>
<rect x="479" y="337" width="3" height="5" fill="#f23645"/>
<rect x="485" y="322" width="1" height="17" fill="#089981"/>
<rect x="484" y="327" width="3" height="12" fill="#089981"/>
<rect x="491" y="320" width="1" height="13" fill="#f23645"/>
<rect x="490" y="325" width="3" height="6" fill="#f23645"/>
<rect x="496" y="338" width="1" height="5" fill="#089981"/>
<rect x="495" y="340" width="3" height="3" fill="#089981"/>
<rect x="502" y="337" width="1" height="11" fill="#f23645"/>
<rect x="501" y="337" width="3" height="10" fill="#f23645"/>
<rect x="507" y="335" width="1" height="8" fill="#f23645"/>
<rect x="506" y="338" width="3" height="4" fill="#f23645"/>
<rect x="513" y="342" width="1" height="4" fill="#f23645"/>
<rect x="512" y="342" width="3" height="3" fill="#f23645"/>
<rect x="518" y="345" width="1" height="5" fill="#089981"/>
<rect x="517" y="347" width="3" height="1" fill="#089981"/>
<rect x="524" y="347" width="1" height="5" fill="#f23645"/>
<rect x="523" y="350" width="3" height="1" fill="#f23645"/>
<rect x="529" y="343" width="1" height="6" fill="#089981"/>
<rect x="528" y="345" width="3" height="3" fill="#089981"/>
<rect x="535" y="337" width="1" height="8" fill="#089981"/>
<rect x="534" y="344" width="3" height="1" fill="#089981"/>
<rect x="540" y="329" width="1" height="9" fill="#f23645"/>
<rect x="539" y="331" width="3" height="2" fill="#f23645"/>
<rect x="546" y="333" width="1" height="6" fill="#089981"/>
<rect x="545" y="336" width="3" height="2" fill="#089981"/>
<rect x="551" y="331" width="1" height="6" fill="#f23645"/>
<rect x="550" y="334" width="3" height="3" fill="#f23645"/>
<rect x="557" y="338" width="1" height="7" fill="#f23645"/>
<rect x="556" y="339" width="3" height="5" fill="#f23645"/>
<rect x="562" y="336" width="1" height="5" fill="#089981"/>
<rect x="561" y="337" width="3" height="2" fill="#089981"/>
<rect x="568" y="341" width="1" height="6" fill="#089981"/>
<rect x="567" y="341" width="3" height="4" fill="#089981"/>
<rect x="573" y="341" width="1" height="5" fill="#f23645"/>
<rect x="572" y="343" width="3" height="3" fill="#f23645"/>
<rect x="579" y="339" width="1" height="8" fill="#f23645"/>
<rect x="578" y="343" width="3" height="4" fill="#f23645"/>
<rect x="584" y="347" width="1" height="3" fill="#f23645"/>
<rect x="583" y="348" width="3" height="2" fill="#f23645"/>
<rect x="590" y="351" width="1" height="5" fill="#089981"/>
<rect x="589" y="352" width="3" height="1" fill="#089981"/>
<rect x="595" y="356" width="1" height="6" fill="#f23645"/>
<rect x="594" y="357" width="3" height="3" fill="#f23645"/>
<rect x="601" y="355" width="1" height="6" fill="#f23645"/>
<rect x="600" y="359" width="3" height="1" fill="#f23645"/>
<rect x="606" y="354" width="1" height="6" fill="#f23645"/>
<rect x="605" y="355" width="3" height="5" fill="#f23645"/>
<rect x="612" y="362" width="1" height="5" fill="#f23645"/>
<rect x="611" y="363" width="3" height="4" fill="#f23645"/>
<rect x="617" y="364" width="1" height="5" fill="#f23645"/>
<rect x="616" y="365" width="3" height="3" fill="#f23645"/>
<rect x="623" y="363" width="1" height="13" fill="#089981"/>
<rect x="622" y="367" width="3" height="7" fill="#089981"/>
<rect x="628" y="347" width="1" height="18" fill="#089981"/>
<rect x="627" y="355" width="3" height="9" fill="#089981"/>
<rect x="634" y="359" width="1" height="7" fill="#f23645"/>
<rect x="633" y="360" width="3" height="3" fill="#f23645"/>
<rect x="639" y="358" width="1" height="7" fill="#089981"/>
<rect x="638" y="362" width="3" height="3" fill="#089981"/>
<rect x="645" y="358" width="1" height="6" fill="#f23645"/>
<rect x="644" y="362" width="3" height="2" fill="#f23645"/>
<rect x="650" y="352" width="1" height="10" fill="#089981"/>
<rect x="649" y="352" width="3" height="10" fill="#089981"/>
<rect x="656" y="348" width="1" height="9" fill="#f23645"/>
<rect x="655" y="350" width="3" height="7" fill="#f23645"/>
<rect x="661" y="359" width="1" height="4" fill="#f23645"/>
<rect x="660" y="360" width="3" height="3" fill="#f23645"/>
<rect x="667" y="364" width="1" height="5" fill="#f23645"/>
<rect x="666" y="366" width="3" height="3" fill="#f23645"/>
<rect x="672" y="364" width="1" height="4" fill="#089981"/>
<rect x="671" y="367" width="3" height="1" fill="#089981"/>
<rect x="678" y="367" width="1" height="5" fill="#f23645"/>
<rect x="677" y="368" width="3" height="4" fill="#f23645"/>
<rect x="683" y="369" width="1" height="4" fill="#f23645"/>
<rect x="682" y="370" width="3" height="3" fill="#f23645"/>
<rect x="689" y="370" width="1" height="4" fill="#f23645"/>
<rect x="688" y="371" width="3" height="3" fill="#f23645"/>
<rect x="694" y="371" width="1" height="6" fill="#089981"/>
<rect x="693" y="372" width="3" height="2" fill="#089981"/>
<rect x="700" y="365" width="1" height="8" fill="#089981"/>
<rect x="699" y="368" width="3" height="3" fill="#089981"/>
<rect x="705" y="365" width="1" height="6" fill="#f23645"/>
<rect x="704" y="365" width="3" height="6" fill="#f23645"/>
<rect x="711" y="369" width="1" height="4" fill="#f23645"/>
<rect x="710" y="370" width="3" height="3" fill="#f23645"/>
<rect x="716" y="366" width="1" height="8" fill="#089981"/>
<rect x="715" y="370" width="3" height="3" fill="#089981"/>
<rect x="722" y="369" width="1" height="4" fill="#f23645"/>
<rect x="721" y="369" width="3" height="4" fill="#f23645"/>
<rect x="727" y="365" width="1" height="6" fill="#089981"/>
<rect x="726" y="368" width="3" height="3" fill="#089981"/>
<rect x="732" y="366" width="1" height="4" fill="#f23645"/>
<rect x="731" y="369" width="3" height="1" fill="#f23645"/>
<rect x="738" y="366" width="1" height="4" fill="#089981"/>
<rect x="737" y="368" width="3" height="1" fill="#089981"/>
<rect x="743" y="370" width="1" height="4" fill="#f23645"/>
<rect x="742" y="371" width="3" height="3" fill="#f23645"/>
<rect x="749" y="367" width="1" height="7" fill="#089981"/>
<rect x="748" y="368" width="3" height="5" fill="#089981"/>
<rect x="754" y="364" width="1" height="6" fill="#f23645"/>
<rect x="753" y="367" width="3" height="3" fill="#f23645"/>
<rect x="760" y="358" width="1" height="11" fill="#089981"/>
<rect x="759" y="359" width="3" height="8" fill="#089981"/>
<rect x="765" y="340" width="1" height="18" fill="#089981"/>
<rect x="764" y="348" width="3" height="8" fill="#089981"/>
<rect x="771" y="331" width="1" height="11" fill="#089981"/>
<rect x="770" y="334" width="3" height="4" fill="#089981"/>
<rect x="776" y="328" width="1" height="8" fill="#089981"/>
<rect x="775" y="330" width="3" height="1" fill="#089981"/>
<rect x="782" y="333" width="1" height="12" fill="#f23645"/>
<rect x="781" y="333" width="3" height="5" fill="#f23645"/>
<rect x="787" y="317" width="1" height="20" fill="#089981"/>
<rect x="786" y="322" width="3" height="15" fill="#089981"/>
<rect x="793" y="313" width="1" height="15" fill="#089981"/>
<rect x="792" y="322" width="3" height="1" fill="#089981"/>
<rect x="798" y="308" width="1" height="11" fill="#089981"/>
<rect x="797" y="316" width="3" height="3" fill="#089981"/>
<rect x="804" y="286" width="1" height="24" fill="#089981"/>
<rect x="803" y="291" width="3" height="19" fill="#089981"/>
<rect x="809" y="280" width="1" height="18" fill="#f23645"/>
<rect x="808" y="281" width="3" height="15" fill="#f23645"/>
<rect x="815" y="294" width="1" height="13" fill="#f23645"/>
<rect x="814" y="295" width="3" height="6" fill="#f23645"/>
<rect x="820" y="286" width="1" height="16" fill="#089981"/>
<rect x="819" y="295" width="3" height="5" fill="#089981"/>
<rect x="826" y="291" width="1" height="10" fill="#f23645"/>
<rect x="825" y="292" width="3" height="9" fill="#f23645"/>
<rect x="831" y="299" width="1" height="9" fill="#f23645"/>
<rect x="830" y="300" width="3" height="7" fill="#f23645"/>
<rect x="837" y="311" width="1" height="6" fill="#f23645"/>
<rect x="836" y="312" width="3" height="5" fill="#f23645"/>
<rect x="842" y="292" width="1" height="27" fill="#089981"/>
<rect x="841" y="298" width="3" height="11" fill="#089981"/>
<rect x="848" y="288" width="1" height="17" fill="#089981"/>
<rect x="847" y="291" width="3" height="14" fill="#089981"/>
<rect x="853" y="296" width="1" height="17" fill="#f23645"/>
<rect x="852" y="297" width="3" height="16" fill="#f23645"/>
<rect x="859" y="308" width="1" height="11" fill="#f23645"/>
<rect x="858" y="309" width="3" height="9" fill="#f23645"/>
<rect x="864" y="308" width="1" height="8" fill="#089981"/>
<rect x="863" y="311" width="3" height="2" fill="#089981"/>
<rect x="870" y="306" width="1" height="6" fill="#089981"/>
<rect x="869" y="308" width="3" height="4" fill="#089981"/>
<rect x="875" y="298" width="1" height="8" fill="#089981"/>
<rect x="874" y="299" width="3" height="7" fill="#089981"/>
<rect x="881" y="291" width="1" height="8" fill="#f23645"/>
<rect x="880" y="293" width="3" height="4" fill="#f23645"/>
<rect x="886" y="304" width="1" height="15" fill="#f23645"/>
<rect x="885" y="304" width="3" height="15" fill="#f23645"/>
<rect x="892" y="311" width="1" height="4" fill="#089981"/>
<rect x="891" y="311" width="3" height="1" fill="#089981"/>
<rect x="897" y="316" width="1" height="8" fill="#f23645"/>
<rect x="896" y="317" width="3" height="3" fill="#f23645"/>
<rect x="903" y="300" width="1" height="15" fill="#089981"/>
<rect x="902" y="301" width="3" height="14" fill="#089981"/>
<rect x="908" y="293" width="1" height="8" fill="#f23645"/>
<rect x="907" y="296" width="3" height="3" fill="#f23645"/>
<rect x="914" y="279" width="1" height="16" fill="#089981"/>
<rect x="913" y="287" width="3" height="8" fill="#089981"/>
<rect x="919" y="284" width="1" height="9" fill="#089981"/>
<rect x="918" y="287" width="3" height="5" fill="#089981"/>
<rect x="925" y="256" width="1" height="24" fill="#089981"/>
<rect x="924" y="263" width="3" height="17" fill="#089981"/>
<rect x="930" y="210" width="1" height="41" fill="#089981"/>
<rect x="929" y="222" width="3" height="25" fill="#089981"/>
<rect x="936" y="202" width="1" height="34" fill="#f23645"/>
<rect x="935" y="204" width="3" height="32" fill="#f23645"/>
<rect x="941" y="197" width="1" height="24" fill="#089981"/>
<rect x="940" y="204" width="3" height="17" fill="#089981"/>
<rect x="947" y="208" width="1" height="16" fill="#f23645"/>
<rect x="946" y="214" width="3" height="9" fill="#f23645"/>
<rect x="952" y="212" width="1" height="14" fill="#f23645"/>
<rect x="951" y="213" width="3" height="1" fill="#f23645"/>
<rect x="958" y="213" width="1" height="13" fill="#f23645"/>
<rect x="957" y="217" width="3" height="4" fill="#f23645"/>
<rect x="963" y="207" width="1" height="30" fill="#089981"/>
<rect x="962" y="210" width="3" height="18" fill="#089981"/>
<rect x="969" y="219" width="1" height="19" fill="#f23645"/>
<rect x="968" y="220" width="3" height="4" fill="#f23645"/>
<rect x="974" y="230" width="1" height="11" fill="#089981"/>
<rect x="973" y="233" width="3" height="4" fill="#089981"/>
<rect x="980" y="228" width="1" height="16" fill="#f23645"/>
<rect x="979" y="230" width="3" height="13" fill="#f23645"/>
<rect x="985" y="228" width="1" height="14" fill="#089981"/>
<rect x="984" y="231" width="3" height="7" fill="#089981"/>
<rect x="991" y="223" width="1" height="15" fill="#089981"/>
<rect x="990" y="225" width="3" height="13" fill="#089981"/>
<rect x="996" y="251" width="1" height="9" fill="#f23645"/>
<rect x="995" y="253" width="3" height="2" fill="#f23645"/>
<rect x="1002" y="233" width="1" height="18" fill="#089981"/>
<rect x="1001" y="236" width="3" height="13" fill="#089981"/>
<rect x="1007" y="225" width="1" height="18" fill="#089981"/>
<rect x="1006" y="228" width="3" height="11" fill="#089981"/>
<rect x="1013" y="197" width="1" height="21" fill="#089981"/>
<rect x="1012" y="214" width="3" height="3" fill="#089981"/>
<rect x="1018" y="184" width="1" height="31" fill="#089981"/>
<rect x="1017" y="187" width="3" height="25" fill="#089981"/>
<rect x="1024" y="165" width="1" height="20" fill="#089981"/>
<rect x="1023" y="165" width="3" height="12" fill="#089981"/>
<rect x="1029" y="162" width="1" height="16" fill="#089981"/>
<rect x="1028" y="169" width="3" height="8" fill="#089981"/>
<rect x="1035" y="157" width="1" height="17" fill="#f23645"/>
<rect x="1034" y="158" width="3" height="12" fill="#f23645"/>
<rect x="1040" y="167" width="1" height="31" fill="#f23645"/>
<rect x="1039" y="169" width="3" height="25" fill="#f23645"/>
<rect x="1046" y="179" width="1" height="21" fill="#089981"/>
<rect x="1045" y="192" width="3" height="2" fill="#089981"/>
<rect x="1051" y="171" width="1" height="18" fill="#089981"/>
<rect x="1050" y="182" width="3" height="3" fill="#089981"/>
<rect x="1057" y="153" width="1" height="35" fill="#089981"/>
<rect x="1056" y="164" width="3" height="23" fill="#089981"/>
<rect x="1062" y="169" width="1" height="21" fill="#f23645"/>
<rect x="1061" y="172" width="3" height="15" fill="#f23645"/>
<rect x="1068" y="174" width="1" height="18" fill="#089981"/>
<rect x="1067" y="177" width="3" height="5" fill="#089981"/>
<rect x="1073" y="148" width="1" height="26" fill="#089981"/>
<rect x="1072" y="156" width="3" height="18" fill="#089981"/>
<rect x="1079" y="142" width="1" height="18" fill="#f23645"/>
<rect x="1078" y="147" width="3" height="9" fill="#f23645"/>
<rect x="1084" y="136" width="1" height="19" fill="#089981"/>
<rect x="1083" y="142" width="3" height="3" fill="#089981"/>
<rect x="1090" y="147" width="1" height="15" fill="#f23645"/>
<rect x="1089" y="147" width="3" height="6" fill="#f23645"/>
<rect x="1095" y="144" width="1" height="15" fill="#f23645"/>
<rect x="1094" y="156" width="3" height="3" fill="#f23645"/>
<rect x="1101" y="157" width="1" height="16" fill="#f23645"/>
<rect x="1100" y="159" width="3" height="4" fill="#f23645"/>
<rect x="1106" y="144" width="1" height="15" fill="#089981"/>
<rect x="1105" y="144" width="3" height="14" fill="#089981"/>
<rect x="1112" y="147" width="1" height="21" fill="#f23645"/>
<rect x="1111" y="149" width="3" height="16" fill="#f23645"/>
<rect x="1117" y="165" width="1" height="41" fill="#f23645"/>
<rect x="1116" y="165" width="3" height="39" fill="#f23645"/>
<rect x="1123" y="177" width="1" height="13" fill="#089981"/>
<rect x="1122" y="179" width="3" height="10" fill="#089981"/>
<rect x="1128" y="188" width="1" height="12" fill="#f23645"/>
<rect x="1127" y="193" width="3" height="6" fill="#f23645"/>
<rect x="1134" y="186" width="1" height="16" fill="#f23645"/>
<rect x="1133" y="189" width="3" height="9" fill="#f23645"/>
<rect x="1139" y="195" width="1" height="31" fill="#089981"/>
<rect x="1138" y="197" width="3" height="29" fill="#089981"/>
<rect x="1145" y="200" width="1" height="12" fill="#089981"/>
<rect x="1144" y="201" width="3" height="11" fill="#089981"/>
<rect x="1150" y="184" width="1" height="19" fill="#089981"/>
<rect x="1149" y="185" width="3" height="17" fill="#089981"/>
<rect x="1156" y="193" width="1" height="6" fill="#f23645"/>
<rect x="1155" y="194" width="3" height="5" fill="#f23645"/>
<rect x="1161" y="185" width="1" height="20" fill="#f23645"/>
<rect x="1160" y="194" width="3" height="3" fill="#f23645"/>
<rect x="1167" y="190" width="1" height="5" fill="#f23645"/>
<rect x="1166" y="193" width="3" height="2" fill="#f23645"/>
<rect x="1172" y="187" width="1" height="13" fill="#089981"/>
<rect x="1171" y="193" width="3" height="4" fill="#089981"/>
<rect x="1178" y="177" width="1" height="11" fill="#f23645"/>
<rect x="1177" y="184" width="3" height="3" fill="#f23645"/>
<rect x="1183" y="182" width="1" height="12" fill="#089981"/>
<rect x="1182" y="184" width="3" height="5" fill="#089981"/>
<rect x="1189" y="171" width="1" height="14" fill="#089981"/>
<rect x="1188" y="181" width="3" height="1" fill="#089981"/>
<rect x="1194" y="175" width="1" height="14" fill="#f23645"/>
<rect x="1193" y="186" width="3" height="3" fill="#f23645"/>
<rect x="1200" y="174" width="1" height="22" fill="#089981"/>
<rect x="1199" y="175" width="3" height="12" fill="#089981"/>
<rect x="1205" y="162" width="1" height="14" fill="#089981"/>
<rect x="1204" y="167" width="3" height="5" fill="#089981"/>
<rect x="1210" y="170" width="1" height="15" fill="#f23645"/>
<rect x="1209" y="178" width="3" height="3" fill="#f23645"/>
<rect x="1216" y="168" width="1" height="11" fill="#089981"/>
<rect x="1215" y="173" width="3" height="1" fill="#089981"/>
<rect x="1221" y="160" width="1" height="22" fill="#f23645"/>
<rect x="1220" y="167" width="3" height="14" fill="#f23645"/>
<rect x="1227" y="187" width="1" height="18" fill="#f23645"/>
<rect x="1226" y="187" width="3" height="9" fill="#f23645"/>
<rect x="1232" y="185" width="1" height="21" fill="#f23645"/>
<rect x="1231" y="190" width="3" height="14" fill="#f23645"/>
<rect x="1238" y="188" width="1" height="21" fill="#f23645"/>
<rect x="1237" y="191" width="3" height="17" fill="#f23645"/>
<rect x="1243" y="212" width="1" height="10" fill="#f23645"/>
<rect x="1242" y="213" width="3" height="4" fill="#f23645"/>
<rect x="1249" y="214" width="1" height="18" fill="#f23645"/>
<rect x="1248" y="217" width="3" height="11" fill="#f23645"/>
<rect x="1254" y="224" width="1" height="18" fill="#089981"/>
<rect x="1253" y="231" width="3" height="10" fill="#089981"/>
<rect x="1260" y="225" width="1" height="14" fill="#f23645"/>
<rect x="1259" y="233" width="3" height="4" fill="#f23645"/>
<rect x="1265" y="238" width="1" height="10" fill="#089981"/>
<rect x="1264" y="241" width="3" height="1" fill="#089981"/>
<rect x="1271" y="240" width="1" height="14" fill="#f23645"/>
<rect x="1270" y="243" width="3" height="10" fill="#f23645"/>
<rect x="1276" y="246" width="1" height="26" fill="#f23645"/>
<rect x="1275" y="249" width="3" height="23" fill="#f23645"/>
<rect x="1282" y="255" width="1" height="16" fill="#089981"/>
<rect x="1281" y="261" width="3" height="6" fill="#089981"/>
<rect x="1287" y="247" width="1" height="8" fill="#f23645"/>
<rect x="1286" y="251" width="3" height="2" fill="#f23645"/>
<rect x="1293" y="255" width="1" height="17" fill="#f23645"/>
<rect x="1292" y="261" width="3" height="5" fill="#f23645"/>
<rect x="1298" y="254" width="1" height="22" fill="#f23645"/>
<rect x="1297" y="263" width="3" height="5" fill="#f23645"/>
<rect x="1304" y="259" width="1" height="10" fill="#089981"/>
<rect x="1303" y="265" width="3" height="1" fill="#089981"/>
<rect x="1309" y="269" width="1" height="15" fill="#f23645"/>
<rect x="1308" y="274" width="3" height="9" fill="#f23645"/>
<rect x="1315" y="282" width="1" height="9" fill="#f23645"/>
<rect x="1314" y="283" width="3" height="8" fill="#f23645"/>
<rect x="1320" y="292" width="1" height="13" fill="#f23645"/>
<rect x="1319" y="292" width="3" height="11" fill="#f23645"/>
<rect x="1326" y="290" width="1" height="6" fill="#089981"/>
<rect x="1325" y="291" width="3" height="4" fill="#089981"/>
<rect x="1331" y="282" width="1" height="8" fill="#f23645"/>
<rect x="1330" y="282" width="3" height="8" fill="#f23645"/>
<rect x="1337" y="279" width="1" height="11" fill="#089981"/>
<rect x="1336" y="286" width="3" height="3" fill="#089981"/>
<rect x="1342" y="287" width="1" height="6" fill="#089981"/>
<rect x="1341" y="290" width="3" height="2" fill="#089981"/>
<rect x="1348" y="285" width="1" height="8" fill="#089981"/>
<rect x="1347" y="290" width="3" height="1" fill="#089981"/>
<rect x="1353" y="281" width="1" height="15" fill="#089981"/>
<rect x="1352" y="284" width="3" height="9" fill="#089981"/>
<rect x="1359" y="278" width="1" height="13" fill="#f23645"/>
<rect x="1358" y="284" width="3" height="7" fill="#f23645"/>
<rect x="1364" y="287" width="1" height="6" fill="#f23645"/>
<rect x="1363" y="289" width="3" height="4" fill="#f23645"/>
<rect x="1370" y="290" width="1" height="4" fill="#089981"/>
<rect x="1369" y="290" width="3" height="4" fill="#089981"/>
<rect x="1375" y="288" width="1" height="11" fill="#f23645"/>
<rect x="1374" y="291" width="3" height="8" fill="#f23645"/>
<rect x="1381" y="291" width="1" height="5" fill="#f23645"/>
<rect x="1380" y="294" width="3" height="2" fill="#f23645"/>
<rect x="1386" y="290" width="1" height="3" fill="#089981"/>
<rect x="1385" y="292" width="3" height="1" fill="#089981"/>
<rect x="11" y="481" width="1434" height="3" fill="#ffeb3b"/>
</g>
<g shape-rendering="crispEdges">
<rect x="1444" y="28" width="1" height="828" fill="#e6e6e6"/>
<rect x="11" y="829" width="1498" height="1" fill="#e6e6e6"/>
</g>
<text x="10.5" y="19.2" font-family="Liberation Sans, sans-serif" font-size="12" font-weight="normal" fill="#dadada" textLength="62.8" lengthAdjust="spacingAndGlyphs" stroke="#dadada" stroke-width="0.3">ISINConnect</text>
<text x="78.3" y="19.2" font-family="Liberation Sans, sans-serif" font-size="12" font-weight="normal" fill="#dadada" textLength="33.0" lengthAdjust="spacingAndGlyphs" stroke="#dadada" stroke-width="0.3">creato</text>
<text x="117" y="19.2" font-family="Liberation Sans, sans-serif" font-size="12" font-weight="normal" fill="#dadada" textLength="18.0" lengthAdjust="spacingAndGlyphs" stroke="#dadada" stroke-width="0.3">con</text>
<text x="138.8" y="19.2" font-family="Liberation Sans, sans-serif" font-size="12" font-weight="normal" fill="#dadada" textLength="90.7" lengthAdjust="spacingAndGlyphs" stroke="#dadada" stroke-width="0.3">TradingView.com,</text>
<text x="236.8" y="19.2" font-family="Liberation Sans, sans-serif" font-size="12" font-weight="normal" fill="#dadada" textLength="15.7" lengthAdjust="spacingAndGlyphs" stroke="#dadada" stroke-width="0.3">Dic</text>
<text x="257.5" y="19.2" font-family="Liberation Sans, sans-serif" font-size="12" font-weight="normal" fill="#dadada" textLength="14.5" lengthAdjust="spacingAndGlyphs" stroke="#dadada" stroke-width="0.3">20,</text>
<text x="278" y="19.2" font-family="Liberation Sans, sans-serif" font-size="12" font-weight="normal" fill="#dadada" textLength="23.3" lengthAdjust="spacingAndGlyphs" stroke="#dadada" stroke-width="0.3">2025</text>
<text x="307" y="19.2" font-family="Liberation Sans, sans-serif" font-size="12" font-weight="normal" fill="#dadada" textLength="25.5" lengthAdjust="spacingAndGlyphs" stroke="#dadada" stroke-width="0.3">13:19</text>
<text x="339.5" y="19.2" font-family="Liberation Sans, sans-serif" font-size="12" font-weight="normal" fill="#dadada" textLength="34.3" lengthAdjust="spacingAndGlyphs" stroke="#dadada" stroke-width="0.3">UTC+1</text>
<text x="18" y="46.2" font-family="Liberation Sans, sans-serif" font-size="12" font-weight="normal" fill="#c8c8c8" textLength="18.3" lengthAdjust="spacingAndGlyphs">NIO</text>
<text x="48.8" y="46.2" font-family="Liberation Sans, sans-serif" font-size="12" font-weight="normal" fill="#c8c8c8" textLength="18.7" lengthAdjust="spacingAndGlyphs">NIO</text>
<text x="71.8" y="46.2" font-family="Liberation Sans, sans-serif" font-size="12" font-weight="normal" fill="#c8c8c8" textLength="17.7" lengthAdjust="spacingAndGlyphs">Inc.</text>
<text x="95.5" y="46.2" font-family="Liberation Sans, sans-serif" font-size="12" font-weight="normal" fill="#c8c8c8" textLength="51.5" lengthAdjust="spacingAndGlyphs">Sponsored</text>
<text x="153" y="46.2" font-family="Liberation Sans, sans-serif" font-size="12" font-weight="normal" fill="#c8c8c8" textLength="19.5" lengthAdjust="spacingAndGlyphs">ADR</text>
<text x="178.3" y="46.2" font-family="Liberation Sans, sans-serif" font-size="12" font-weight="normal" fill="#c8c8c8" textLength="24.2" lengthAdjust="spacingAndGlyphs">Class</text>
<text x="208.3" y="46.2" font-family="Liberation Sans, sans-serif" font-size="12" font-weight="normal" fill="#c8c8c8" textLength="7.2" lengthAdjust="spacingAndGlyphs">A</text>
<text x="228.8" y="46.2" font-family="Liberation Sans, sans-serif" font-size="12" font-weight="normal" fill="#c8c8c8" textLength="12.0" lengthAdjust="spacingAndGlyphs">1D</text>
<text x="253.3" y="46.2" font-family="Liberation Sans, sans-serif" font-size="12" font-weight="normal" fill="#c8c8c8" textLength="25.5" lengthAdjust="spacingAndGlyphs">NYSE</text>
<text x="287" y="46.2" font-family="Liberation Sans, sans-serif" font-size="12" font-weight="normal" fill="#c8c8c8" textLength="8.2" lengthAdjust="spacingAndGlyphs">O</text>
<text x="299.4" y="46.2" font-family="Liberation Sans, sans-serif" font-size="12" font-weight="normal" fill="#c8c8c8" textLength="3.3" lengthAdjust="spacingAndGlyphs">-</text>
<text x="306.7" y="46.2" font-family="Liberation Sans, sans-serif" font-size="12" font-weight="normal" fill="#c8c8c8" textLength="26.3" lengthAdjust="spacingAndGlyphs">Aper.</text>
<text x="365.3" y="46.2" font-family="Liberation Sans, sans-serif" font-size="12" font-weight="normal" fill="#c8c8c8" textLength="7.3" lengthAdjust="spacingAndGlyphs">H</text>
<text x="376.8" y="46.2" font-family="Liberation Sans, sans-serif" font-size="12" font-weight="normal" fill="#c8c8c8" textLength="3.4" lengthAdjust="spacingAndGlyphs">-</text>
<text x="384.2" y="46.2" font-family="Liberation Sans, sans-serif" font-size="12" font-weight="normal" fill="#c8c8c8" textLength="24.2" lengthAdjust="spacingAndGlyphs">Max.</text>
<text x="440.6" y="46.2" font-family="Liberation Sans, sans-serif" font-size="12" font-weight="normal" fill="#c8c8c8" textLength="5.7" lengthAdjust="spacingAndGlyphs">L</text>
<text x="450.1" y="46.2" font-family="Liberation Sans, sans-serif" font-size="12" font-weight="normal" fill="#c8c8c8" textLength="3.4" lengthAdjust="spacingAndGlyphs">-</text>
<text x="457.9" y="46.2" font-family="Liberation Sans, sans-serif" font-size="12" font-weight="normal" fill="#c8c8c8" textLength="21.7" lengthAdjust="spacingAndGlyphs">Min.</text>
<text x="511.6" y="46.2" font-family="Liberation Sans, sans-serif" font-size="12" font-weight="normal" fill="#c8c8c8" textLength="7.4" lengthAdjust="spacingAndGlyphs">C</text>
<text x="523.2" y="46.2" font-family="Liberation Sans, sans-serif" font-size="12" font-weight="normal" fill="#c8c8c8" textLength="3.1" lengthAdjust="spacingAndGlyphs">-</text>
<text x="530.1" y="46.2" font-family="Liberation Sans, sans-serif" font-size="12" font-weight="normal" fill="#c8c8c8" textLength="32.0" lengthAdjust="spacingAndGlyphs">Chius.</text>
<rect x="41.6" y="41.2" width="2.4" height="2.4" fill="#c8c8c8"/>
<rect x="220.1" y="41.2" width="2.4" height="2.4" fill="#c8c8c8"/>
<rect x="246.4" y="41.2" width="2.4" height="2.4" fill="#c8c8c8"/>
<text x="334.4" y="46.2" font-family="Liberation Sans, sans-serif" font-size="12" font-weight="normal" fill="#089981" textLength="22.5" lengthAdjust="spacingAndGlyphs">4,99</text>
<text x="409.7" y="46.2" font-family="Liberation Sans, sans-serif" font-size="12" font-weight="normal" fill="#089981" textLength="22.3" lengthAdjust="spacingAndGlyphs">5,03</text>
<text x="481" y="46.2" font-family="Liberation Sans, sans-serif" font-size="12" font-weight="normal" fill="#089981" textLength="22.6" lengthAdjust="spacingAndGlyphs">4,98</text>
<text x="563.2" y="46.2" font-family="Liberation Sans, sans-serif" font-size="12" font-weight="normal" fill="#089981" textLength="22.5" lengthAdjust="spacingAndGlyphs">4,99</text>
<text x="18" y="62.6" font-family="Liberation Sans, sans-serif" font-size="12" font-weight="normal" fill="#2962ff" textLength="22.8" lengthAdjust="spacingAndGlyphs" xml:space="preserve">4,64</text>
<text x="18" y="534.8" font-family="Liberation Sans, sans-serif" font-size="12" font-weight="bold" fill="#ffff00" textLength="29.4" lengthAdjust="spacingAndGlyphs" xml:space="preserve">35,19</text>
<text x="18.3" y="691" font-family="Liberation Sans, sans-serif" font-size="12" font-weight="normal" fill="#1b5e20" textLength="28" lengthAdjust="spacingAndGlyphs" xml:space="preserve">29,19</text>
<text x="49.6" y="691" font-family="Liberation Sans, sans-serif" font-size="12" font-weight="normal" fill="#1b5e20" textLength="8.4" lengthAdjust="spacingAndGlyphs" xml:space="preserve">M</text>
<text x="65" y="691" font-family="Liberation Sans, sans-serif" font-size="12" font-weight="normal" fill="#f23645" textLength="28" lengthAdjust="spacingAndGlyphs" xml:space="preserve">45,22</text>
<text x="96.4" y="691" font-family="Liberation Sans, sans-serif" font-size="12" font-weight="normal" fill="#f23645" textLength="8.6" lengthAdjust="spacingAndGlyphs" xml:space="preserve">M</text>
<text x="18.3" y="708" font-family="Liberation Sans, sans-serif" font-size="12" font-weight="normal" fill="#2962ff" textLength="28" lengthAdjust="spacingAndGlyphs" xml:space="preserve">59,86</text>
<text x="49.6" y="708" font-family="Liberation Sans, sans-serif" font-size="12" font-weight="normal" fill="#2962ff" textLength="8.4" lengthAdjust="spacingAndGlyphs" xml:space="preserve">M</text>
<text x="1452.9" y="37" font-family="Liberation Sans, sans-serif" font-size="12" font-weight="normal" fill="#c4c4c4" textLength="29.6" lengthAdjust="spacingAndGlyphs" stroke="#c4c4c4" stroke-width="0.25" xml:space="preserve">10,00</text>
<text x="1452.9" y="89" font-family="Liberation Sans, sans-serif" font-size="12" font-weight="normal" fill="#c4c4c4" textLength="23.1" lengthAdjust="spacingAndGlyphs" stroke="#c4c4c4" stroke-width="0.25" xml:space="preserve">9,00</text>
<text x="1452.9" y="140" font-family="Liberation Sans, sans-serif" font-size="12" font-weight="normal" fill="#c4c4c4" textLength="23.1" lengthAdjust="spacingAndGlyphs" stroke="#c4c4c4" stroke-width="0.25" xml:space="preserve">8,00</text>
<text x="1452.9" y="192" font-family="Liberation Sans, sans-serif" font-size="12" font-weight="normal" fill="#c4c4c4" textLength="23.1" lengthAdjust="spacingAndGlyphs" stroke="#c4c4c4" stroke-width="0.25" xml:space="preserve">7,00</text>
<text x="1452.9" y="243.5" font-family="Liberation Sans, sans-serif" font-size="12" font-weight="normal" fill="#c4c4c4" textLength="23.1" lengthAdjust="spacingAndGlyphs" stroke="#c4c4c4" stroke-width="0.25" xml:space="preserve">6,00</text>
<text x="1452.9" y="346.3" font-family="Liberation Sans, sans-serif" font-size="12" font-weight="normal" fill="#c4c4c4" textLength="23.1" lengthAdjust="spacingAndGlyphs" stroke="#c4c4c4" stroke-width="0.25" xml:space="preserve">4,00</text>
<text x="1452.9" y="398" font-family="Liberation Sans, sans-serif" font-size="12" font-weight="normal" fill="#c4c4c4" textLength="23.1" lengthAdjust="spacingAndGlyphs" stroke="#c4c4c4" stroke-width="0.25" xml:space="preserve">3,00</text>
<text x="1452.9" y="449.3" font-family="Liberation Sans, sans-serif" font-size="12" font-weight="normal" fill="#c4c4c4" textLength="23.1" lengthAdjust="spacingAndGlyphs" stroke="#c4c4c4" stroke-width="0.25" xml:space="preserve">2,00</text>
<text x="1452.9" y="501" font-family="Liberation Sans, sans-serif" font-size="12" font-weight="normal" fill="#c4c4c4" textLength="36.1" lengthAdjust="spacingAndGlyphs" stroke="#c4c4c4" stroke-width="0.25" xml:space="preserve">1,0000</text>
<text x="1452.9" y="531" font-family="Liberation Sans, sans-serif" font-size="12" font-weight="normal" fill="#c4c4c4" textLength="29.6" lengthAdjust="spacingAndGlyphs" stroke="#c4c4c4" stroke-width="0.25" xml:space="preserve">60,00</text>
<text x="1452.9" y="569" font-family="Liberation Sans, sans-serif" font-size="12" font-weight="normal" fill="#c4c4c4" textLength="29.6" lengthAdjust="spacingAndGlyphs" stroke="#c4c4c4" stroke-width="0.25" xml:space="preserve">40,00</text>
<text x="1452.9" y="607" font-family="Liberation Sans, sans-serif" font-size="12" font-weight="normal" fill="#c4c4c4" textLength="29.6" lengthAdjust="spacingAndGlyphs" stroke="#c4c4c4" stroke-width="0.25" xml:space="preserve">20,00</text>
<text x="1452.9" y="645.6" font-family="Liberation Sans, sans-serif" font-size="12" font-weight="normal" fill="#c4c4c4" textLength="36.1" lengthAdjust="spacingAndGlyphs" stroke="#c4c4c4" stroke-width="0.25" xml:space="preserve">0,0000</text>
<text x="1453.3" y="717" font-family="Liberation Sans, sans-serif" font-size="12" font-weight="normal" fill="#c4c4c4" textLength="19.8" lengthAdjust="spacingAndGlyphs" stroke="#c4c4c4" stroke-width="0.25" xml:space="preserve">200</text>
<text x="1474" y="717" font-family="Liberation Sans, sans-serif" font-size="12" font-weight="normal" fill="#c4c4c4" textLength="8.8" lengthAdjust="spacingAndGlyphs" stroke="#c4c4c4" stroke-width="0.25" xml:space="preserve">M</text>
<text x="1453.3" y="762.8" font-family="Liberation Sans, sans-serif" font-size="12" font-weight="normal" fill="#c4c4c4" textLength="19.8" lengthAdjust="spacingAndGlyphs" stroke="#c4c4c4" stroke-width="0.25" xml:space="preserve">100</text>
<text x="1474" y="762.8" font-family="Liberation Sans, sans-serif" font-size="12" font-weight="normal" fill="#c4c4c4" textLength="8.8" lengthAdjust="spacingAndGlyphs" stroke="#c4c4c4" stroke-width="0.25" xml:space="preserve">M</text>
<g shape-rendering="crispEdges">
<rect x="1445" y="284" width="37" height="17" fill="#089981" rx="2" ry="2" shape-rendering="auto"/><rect x="1445" y="284" width="3" height="17" fill="#089981"/>
<rect x="1445" y="302" width="37" height="17" fill="#2962ff" rx="2" ry="2" shape-rendering="auto"/><rect x="1445" y="302" width="3" height="17" fill="#2962ff"/>
<rect x="1445" y="474" width="37" height="17" fill="#ffeb3b" rx="2" ry="2" shape-rendering="auto"/><rect x="1445" y="474" width="3" height="17" fill="#ffeb3b"/>
<rect x="1445" y="567" width="43" height="17" fill="#ffff00" rx="2" ry="2" shape-rendering="auto"/><rect x="1445" y="567" width="3" height="17" fill="#ffff00"/>
<rect x="1445" y="769" width="53" height="17" fill="#2962ff" rx="2" ry="2" shape-rendering="auto"/><rect x="1445" y="769" width="3" height="17" fill="#2962ff"/>
<rect x="1445" y="786" width="53" height="17" fill="#f23645" rx="2" ry="2" shape-rendering="auto"/><rect x="1445" y="786" width="3" height="17" fill="#f23645"/>
<rect x="1445" y="803" width="53" height="17" fill="#1b5e20" rx="2" ry="2" shape-rendering="auto"/><rect x="1445" y="803" width="3" height="17" fill="#1b5e20"/>
</g>
<text x="1452.6" y="296" font-family="Liberation Sans, sans-serif" font-size="12" font-weight="bold" fill="#fff" textLength="23.6" lengthAdjust="spacingAndGlyphs" xml:space="preserve">4,99</text>
<text x="1452.6" y="314" font-family="Liberation Sans, sans-serif" font-size="12" font-weight="bold" fill="#fff" textLength="23.6" lengthAdjust="spacingAndGlyphs" xml:space="preserve">4,64</text>
<text x="1453.3" y="486" font-family="Liberation Sans, sans-serif" font-size="12" font-weight="normal" fill="#000" textLength="22.5" lengthAdjust="spacingAndGlyphs" xml:space="preserve">1,30</text>
<text x="1453.3" y="579" font-family="Liberation Sans, sans-serif" font-size="12" font-weight="normal" fill="#000" textLength="29" lengthAdjust="spacingAndGlyphs" xml:space="preserve">35,19</text>
<text x="1453.3" y="781" font-family="Liberation Sans, sans-serif" font-size="12" font-weight="bold" fill="#fff" textLength="29" lengthAdjust="spacingAndGlyphs" xml:space="preserve">59,86</text>
<text x="1484" y="781" font-family="Liberation Sans, sans-serif" font-size="12" font-weight="bold" fill="#fff" textLength="9.3" lengthAdjust="spacingAndGlyphs" xml:space="preserve">M</text>
<text x="1453.3" y="798" font-family="Liberation Sans, sans-serif" font-size="12" font-weight="bold" fill="#fff" textLength="29" lengthAdjust="spacingAndGlyphs" xml:space="preserve">45,22</text>
<text x="1484" y="798" font-family="Liberation Sans, sans-serif" font-size="12" font-weight="bold" fill="#fff" textLength="9.3" lengthAdjust="spacingAndGlyphs" xml:space="preserve">M</text>
<text x="1453.3" y="815" font-family="Liberation Sans, sans-serif" font-size="12" font-weight="bold" fill="#fff" textLength="29" lengthAdjust="spacingAndGlyphs" xml:space="preserve">29,19</text>
<text x="1484" y="815" font-family="Liberation Sans, sans-serif" font-size="12" font-weight="bold" fill="#fff" textLength="9.3" lengthAdjust="spacingAndGlyphs" xml:space="preserve">M</text>
<text x="1355" y="471.8" font-family="Liberation Sans, sans-serif" font-size="19.6" font-weight="bold" fill="#ffeb3b" textLength="79" lengthAdjust="spacingAndGlyphs" font-style="italic" xml:space="preserve">BARRIER</text>
<text x="57.0" y="847" font-family="Liberation Sans, sans-serif" font-size="12" font-weight="bold" fill="#cfcfcf" textLength="26.6" lengthAdjust="spacingAndGlyphs" text-anchor="middle" xml:space="preserve">2025</text>
<text x="167.0" y="847" font-family="Liberation Sans, sans-serif" font-size="12" font-weight="normal" fill="#cfcfcf" textLength="19.3" lengthAdjust="spacingAndGlyphs" text-anchor="middle" xml:space="preserve">Feb</text>
<text x="271.0" y="847" font-family="Liberation Sans, sans-serif" font-size="12" font-weight="normal" fill="#cfcfcf" textLength="19.5" lengthAdjust="spacingAndGlyphs" text-anchor="middle" xml:space="preserve">Mar</text>
<text x="386.0" y="847" font-family="Liberation Sans, sans-serif" font-size="12" font-weight="normal" fill="#cfcfcf" textLength="18.5" lengthAdjust="spacingAndGlyphs" text-anchor="middle" xml:space="preserve">Apr</text>
<text x="502.0" y="847" font-family="Liberation Sans, sans-serif" font-size="12" font-weight="normal" fill="#cfcfcf" textLength="21.5" lengthAdjust="spacingAndGlyphs" text-anchor="middle" xml:space="preserve">Mag</text>
<text x="617.0" y="847" font-family="Liberation Sans, sans-serif" font-size="12" font-weight="normal" fill="#cfcfcf" textLength="17.5" lengthAdjust="spacingAndGlyphs" text-anchor="middle" xml:space="preserve">Giu</text>
<text x="727.0" y="847" font-family="Liberation Sans, sans-serif" font-size="12" font-weight="normal" fill="#cfcfcf" textLength="19.5" lengthAdjust="spacingAndGlyphs" text-anchor="middle" xml:space="preserve">Lug</text>
<text x="848.0" y="847" font-family="Liberation Sans, sans-serif" font-size="12" font-weight="normal" fill="#cfcfcf" textLength="20.5" lengthAdjust="spacingAndGlyphs" text-anchor="middle" xml:space="preserve">Ago</text>
<text x="963.0" y="847" font-family="Liberation Sans, sans-serif" font-size="12" font-weight="normal" fill="#cfcfcf" textLength="17.5" lengthAdjust="spacingAndGlyphs" text-anchor="middle" xml:space="preserve">Set</text>
<text x="1079.0" y="847" font-family="Liberation Sans, sans-serif" font-size="12" font-weight="normal" fill="#cfcfcf" textLength="17.5" lengthAdjust="spacingAndGlyphs" text-anchor="middle" xml:space="preserve">Ott</text>
<text x="1205.0" y="847" font-family="Liberation Sans, sans-serif" font-size="12" font-weight="normal" fill="#cfcfcf" textLength="20.5" lengthAdjust="spacingAndGlyphs" text-anchor="middle" xml:space="preserve">Nov</text>
<text x="1309.0" y="847" font-family="Liberation Sans, sans-serif" font-size="12" font-weight="normal" fill="#cfcfcf" textLength="16.5" lengthAdjust="spacingAndGlyphs" text-anchor="middle" xml:space="preserve">Dic</text>
<text x="1430.0" y="847" font-family="Liberation Sans, sans-serif" font-size="12" font-weight="bold" fill="#cfcfcf" textLength="26.6" lengthAdjust="spacingAndGlyphs" text-anchor="middle" xml:space="preserve">2026</text>
<path d="M340.7,493.6 h15.6 a1,1 0 0 1 1,1 v12.6 l-8.8,5.5 l-8.8,-5.5 v-12.6 a1,1 0 0 1 1,-1 z" fill="#131313" stroke="#d9303f" stroke-width="2" stroke-linejoin="round"/>
<path d="M351.6,498.7 h-5.3 v8 h5.3 M346.3,502.6 h4.6" fill="none" stroke="#d9303f" stroke-width="1.3"/>
<path d="M615.7,493.6 h15.6 a1,1 0 0 1 1,1 v12.6 l-8.8,5.5 l-8.8,-5.5 v-12.6 a1,1 0 0 1 1,-1 z" fill="#131313" stroke="#d9303f" stroke-width="2" stroke-linejoin="round"/>
<path d="M626.5999999999999,498.7 h-5.3 v8 h5.3 M621.3,502.6 h4.6" fill="none" stroke="#d9303f" stroke-width="1.3"/>
<path d="M963.5,492.3 l8.8,5.6 v12.3 a1,1 0 0 1 -1,1 h-15.6 a1,1 0 0 1 -1,-1 v-12.3 z" fill="#131313" stroke="#0b9480" stroke-width="2" stroke-linejoin="round"/>
<path d="M966.5999999999999,498.7 h-5.3 v8 h5.3 M961.3,502.6 h4.6" fill="none" stroke="#0b9480" stroke-width="1.3"/>
<path d="M1293.5,492.3 l8.8,5.6 v12.3 a1,1 0 0 1 -1,1 h-15.6 a1,1 0 0 1 -1,-1 v-12.3 z" fill="#131313" stroke="#0b9480" stroke-width="2" stroke-linejoin="round"/>
<path d="M1296.6,498.7 h-5.3 v8 h5.3 M1291.3,502.6 h4.6" fill="none" stroke="#0b9480" stroke-width="1.3"/>
<path d="M12,879 h12 v15 h-6 v-8.5 h-6 z" fill="#d9d9d9"/>
<circle cx="29" cy="882.2" r="2.8" fill="#d9d9d9"/>
<path d="M33.1,879 h8.9 l-5.8,15 h-7.3 z" fill="#d9d9d9"/>
<text x="49" y="893.8" font-family="Liberation Sans, sans-serif" font-size="20" font-weight="bold" fill="#d9d9d9" textLength="120.8" lengthAdjust="spacingAndGlyphs" xml:space="preserve">TradingView</text>
</svg>
</div>
</body></html>
